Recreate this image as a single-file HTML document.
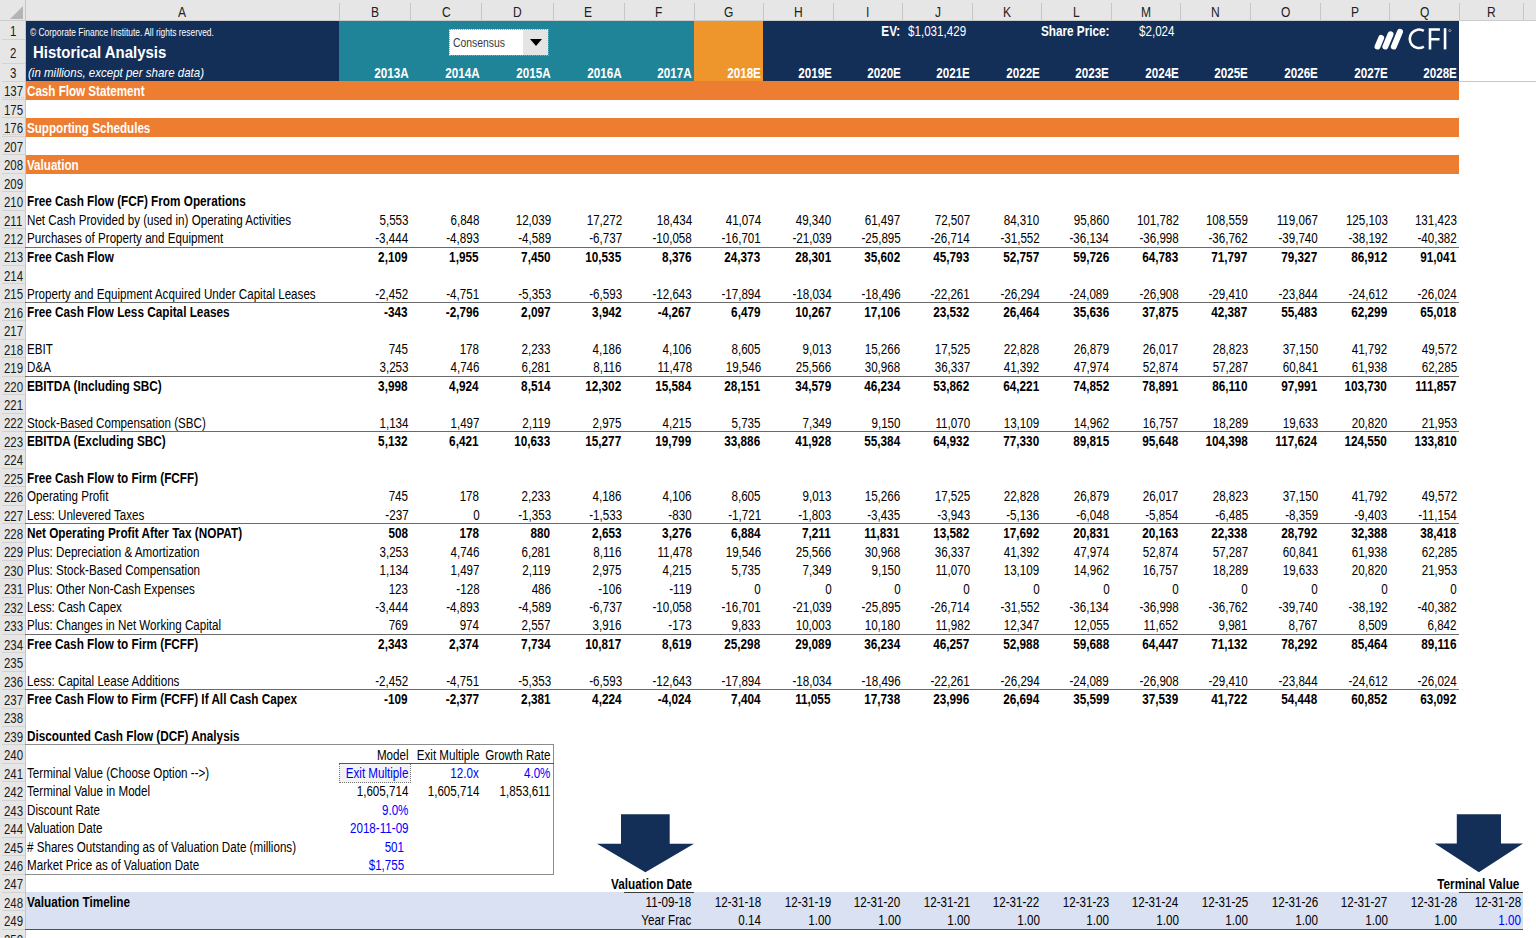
<!DOCTYPE html>
<html><head><meta charset="utf-8"><style>
html,body{margin:0;padding:0;}
body{width:1536px;height:938px;overflow:hidden;position:relative;background:#fff;font-family:"Liberation Sans",sans-serif;}
</style></head><body>
<div style="position:absolute;left:0.00px;top:0.00px;width:1536.00px;height:21.00px;background:#e6e6e6;"></div>
<div style="position:absolute;left:0.00px;top:0.00px;width:25.30px;height:938.00px;background:#e6e6e6;"></div>
<div style="position:absolute;left:25.30px;top:21.00px;width:313.80px;height:60.10px;background:#132e57;"></div>
<div style="position:absolute;left:339.10px;top:21.00px;width:354.90px;height:60.10px;background:#1f8497;"></div>
<div style="position:absolute;left:694.00px;top:21.00px;width:69.30px;height:60.10px;background:#ee952c;"></div>
<div style="position:absolute;left:763.30px;top:21.00px;width:695.90px;height:60.10px;background:#132e57;"></div>
<div style="position:absolute;left:1459.20px;top:80.60px;width:76.80px;height:1.00px;background:#c8c8c8;"></div>
<div style="position:absolute;left:25.30px;top:81.10px;width:1433.90px;height:18.80px;background:#ed7d31;"></div>
<div style="position:absolute;left:25.30px;top:117.80px;width:1433.90px;height:19.20px;background:#ed7d31;"></div>
<div style="position:absolute;left:25.30px;top:154.80px;width:1433.90px;height:19.20px;background:#ed7d31;"></div>
<div style="position:absolute;left:25.30px;top:892.46px;width:1498.00px;height:36.88px;background:#d9e1f2;"></div>
<div style="position:absolute;left:25.00px;top:3.00px;width:1.00px;height:17.00px;background:#c6c6c6;"></div>
<div style="position:absolute;top:5.03px;font-size:14.5px;line-height:14.5px;white-space:nowrap;color:#222;left:178.19px;transform-origin:0 0;transform:scaleX(0.83);">A</div>
<div style="position:absolute;left:339.00px;top:3.00px;width:1.00px;height:17.00px;background:#c6c6c6;"></div>
<div style="position:absolute;top:5.03px;font-size:14.5px;line-height:14.5px;white-space:nowrap;color:#222;left:370.79px;transform-origin:0 0;transform:scaleX(0.83);">B</div>
<div style="position:absolute;left:410.00px;top:3.00px;width:1.00px;height:17.00px;background:#c6c6c6;"></div>
<div style="position:absolute;top:5.03px;font-size:14.5px;line-height:14.5px;white-space:nowrap;color:#222;left:441.65px;transform-origin:0 0;transform:scaleX(0.83);">C</div>
<div style="position:absolute;left:481.00px;top:3.00px;width:1.00px;height:17.00px;background:#c6c6c6;"></div>
<div style="position:absolute;top:5.03px;font-size:14.5px;line-height:14.5px;white-space:nowrap;color:#222;left:512.90px;transform-origin:0 0;transform:scaleX(0.83);">D</div>
<div style="position:absolute;left:553.00px;top:3.00px;width:1.00px;height:17.00px;background:#c6c6c6;"></div>
<div style="position:absolute;top:5.03px;font-size:14.5px;line-height:14.5px;white-space:nowrap;color:#222;left:584.49px;transform-origin:0 0;transform:scaleX(0.83);">E</div>
<div style="position:absolute;left:624.00px;top:3.00px;width:1.00px;height:17.00px;background:#c6c6c6;"></div>
<div style="position:absolute;top:5.03px;font-size:14.5px;line-height:14.5px;white-space:nowrap;color:#222;left:655.32px;transform-origin:0 0;transform:scaleX(0.83);">F</div>
<div style="position:absolute;left:694.00px;top:3.00px;width:1.00px;height:17.00px;background:#c6c6c6;"></div>
<div style="position:absolute;top:5.03px;font-size:14.5px;line-height:14.5px;white-space:nowrap;color:#222;left:723.97px;transform-origin:0 0;transform:scaleX(0.83);">G</div>
<div style="position:absolute;left:763.00px;top:3.00px;width:1.00px;height:17.00px;background:#c6c6c6;"></div>
<div style="position:absolute;top:5.03px;font-size:14.5px;line-height:14.5px;white-space:nowrap;color:#222;left:794.10px;transform-origin:0 0;transform:scaleX(0.83);">H</div>
<div style="position:absolute;left:833.00px;top:3.00px;width:1.00px;height:17.00px;background:#c6c6c6;"></div>
<div style="position:absolute;top:5.03px;font-size:14.5px;line-height:14.5px;white-space:nowrap;color:#222;left:866.48px;transform-origin:0 0;transform:scaleX(0.83);">I</div>
<div style="position:absolute;left:902.00px;top:3.00px;width:1.00px;height:17.00px;background:#c6c6c6;"></div>
<div style="position:absolute;top:5.03px;font-size:14.5px;line-height:14.5px;white-space:nowrap;color:#222;left:934.54px;transform-origin:0 0;transform:scaleX(0.83);">J</div>
<div style="position:absolute;left:972.00px;top:3.00px;width:1.00px;height:17.00px;background:#c6c6c6;"></div>
<div style="position:absolute;top:5.03px;font-size:14.5px;line-height:14.5px;white-space:nowrap;color:#222;left:1003.04px;transform-origin:0 0;transform:scaleX(0.83);">K</div>
<div style="position:absolute;left:1041.00px;top:3.00px;width:1.00px;height:17.00px;background:#c6c6c6;"></div>
<div style="position:absolute;top:5.03px;font-size:14.5px;line-height:14.5px;white-space:nowrap;color:#222;left:1073.25px;transform-origin:0 0;transform:scaleX(0.83);">L</div>
<div style="position:absolute;left:1111.00px;top:3.00px;width:1.00px;height:17.00px;background:#c6c6c6;"></div>
<div style="position:absolute;top:5.03px;font-size:14.5px;line-height:14.5px;white-space:nowrap;color:#222;left:1141.19px;transform-origin:0 0;transform:scaleX(0.83);">M</div>
<div style="position:absolute;left:1180.00px;top:3.00px;width:1.00px;height:17.00px;background:#c6c6c6;"></div>
<div style="position:absolute;top:5.03px;font-size:14.5px;line-height:14.5px;white-space:nowrap;color:#222;left:1211.20px;transform-origin:0 0;transform:scaleX(0.83);">N</div>
<div style="position:absolute;left:1250.00px;top:3.00px;width:1.00px;height:17.00px;background:#c6c6c6;"></div>
<div style="position:absolute;top:5.03px;font-size:14.5px;line-height:14.5px;white-space:nowrap;color:#222;left:1280.52px;transform-origin:0 0;transform:scaleX(0.83);">O</div>
<div style="position:absolute;left:1320.00px;top:3.00px;width:1.00px;height:17.00px;background:#c6c6c6;"></div>
<div style="position:absolute;top:5.03px;font-size:14.5px;line-height:14.5px;white-space:nowrap;color:#222;left:1350.99px;transform-origin:0 0;transform:scaleX(0.83);">P</div>
<div style="position:absolute;left:1389.00px;top:3.00px;width:1.00px;height:17.00px;background:#c6c6c6;"></div>
<div style="position:absolute;top:5.03px;font-size:14.5px;line-height:14.5px;white-space:nowrap;color:#222;left:1419.82px;transform-origin:0 0;transform:scaleX(0.83);">Q</div>
<div style="position:absolute;left:1459.00px;top:3.00px;width:1.00px;height:17.00px;background:#c6c6c6;"></div>
<div style="position:absolute;top:5.03px;font-size:14.5px;line-height:14.5px;white-space:nowrap;color:#222;left:1486.90px;transform-origin:0 0;transform:scaleX(0.83);">R</div>
<div style="position:absolute;left:1523.00px;top:3.00px;width:1.00px;height:17.00px;background:#c6c6c6;"></div>
<div style="position:absolute;left:0.00px;top:20.00px;width:1536.00px;height:1.00px;background:#cccccc;"></div>
<svg style="position:absolute;left:0;top:0" width="26" height="21"><polygon points="10,19 23,19 23,6" fill="#b4b4b4"/></svg>
<div style="position:absolute;left:25.00px;top:0.00px;width:0.50px;height:938.00px;background:#c6c6c6;"></div>
<div style="position:absolute;left:2.00px;top:38.90px;width:23.30px;height:1.00px;background:#d2d2d2;"></div>
<div style="position:absolute;top:24.34px;font-size:14.6px;line-height:14.6px;white-space:nowrap;color:#1a1a1a;left:10.21px;transform-origin:0 0;transform:scaleX(0.785);">1</div>
<div style="position:absolute;left:2.00px;top:62.70px;width:23.30px;height:1.00px;background:#d2d2d2;"></div>
<div style="position:absolute;top:45.94px;font-size:14.6px;line-height:14.6px;white-space:nowrap;color:#1a1a1a;left:10.21px;transform-origin:0 0;transform:scaleX(0.785);">2</div>
<div style="position:absolute;left:2.00px;top:80.60px;width:23.30px;height:1.00px;background:#d2d2d2;"></div>
<div style="position:absolute;top:66.04px;font-size:14.6px;line-height:14.6px;white-space:nowrap;color:#1a1a1a;left:10.21px;transform-origin:0 0;transform:scaleX(0.785);">3</div>
<div style="position:absolute;left:2.00px;top:99.04px;width:23.30px;height:1.00px;background:#d2d2d2;"></div>
<div style="position:absolute;left:3px;top:97px;width:21px;height:0;border-top:1px dotted #c4c4c4"></div>
<div style="position:absolute;top:84.48px;font-size:14.6px;line-height:14.6px;white-space:nowrap;color:#1a1a1a;left:3.84px;transform-origin:0 0;transform:scaleX(0.785);">137</div>
<div style="position:absolute;left:2.00px;top:117.48px;width:23.30px;height:1.00px;background:#d2d2d2;"></div>
<div style="position:absolute;top:102.92px;font-size:14.6px;line-height:14.6px;white-space:nowrap;color:#1a1a1a;left:3.84px;transform-origin:0 0;transform:scaleX(0.785);">175</div>
<div style="position:absolute;left:2.00px;top:135.92px;width:23.30px;height:1.00px;background:#d2d2d2;"></div>
<div style="position:absolute;left:3px;top:134px;width:21px;height:0;border-top:1px dotted #c4c4c4"></div>
<div style="position:absolute;top:121.36px;font-size:14.6px;line-height:14.6px;white-space:nowrap;color:#1a1a1a;left:3.84px;transform-origin:0 0;transform:scaleX(0.785);">176</div>
<div style="position:absolute;left:2.00px;top:154.36px;width:23.30px;height:1.00px;background:#d2d2d2;"></div>
<div style="position:absolute;top:139.80px;font-size:14.6px;line-height:14.6px;white-space:nowrap;color:#1a1a1a;left:3.84px;transform-origin:0 0;transform:scaleX(0.785);">207</div>
<div style="position:absolute;left:2.00px;top:172.80px;width:23.30px;height:1.00px;background:#d2d2d2;"></div>
<div style="position:absolute;top:158.24px;font-size:14.6px;line-height:14.6px;white-space:nowrap;color:#1a1a1a;left:3.84px;transform-origin:0 0;transform:scaleX(0.785);">208</div>
<div style="position:absolute;left:2.00px;top:191.24px;width:23.30px;height:1.00px;background:#d2d2d2;"></div>
<div style="position:absolute;top:176.68px;font-size:14.6px;line-height:14.6px;white-space:nowrap;color:#1a1a1a;left:3.84px;transform-origin:0 0;transform:scaleX(0.785);">209</div>
<div style="position:absolute;left:2.00px;top:209.68px;width:23.30px;height:1.00px;background:#d2d2d2;"></div>
<div style="position:absolute;top:195.12px;font-size:14.6px;line-height:14.6px;white-space:nowrap;color:#1a1a1a;left:3.84px;transform-origin:0 0;transform:scaleX(0.785);">210</div>
<div style="position:absolute;left:2.00px;top:228.12px;width:23.30px;height:1.00px;background:#d2d2d2;"></div>
<div style="position:absolute;top:213.56px;font-size:14.6px;line-height:14.6px;white-space:nowrap;color:#1a1a1a;left:4.26px;transform-origin:0 0;transform:scaleX(0.785);">211</div>
<div style="position:absolute;left:2.00px;top:246.56px;width:23.30px;height:1.00px;background:#d2d2d2;"></div>
<div style="position:absolute;top:232.00px;font-size:14.6px;line-height:14.6px;white-space:nowrap;color:#1a1a1a;left:3.84px;transform-origin:0 0;transform:scaleX(0.785);">212</div>
<div style="position:absolute;left:2.00px;top:265.00px;width:23.30px;height:1.00px;background:#d2d2d2;"></div>
<div style="position:absolute;top:250.44px;font-size:14.6px;line-height:14.6px;white-space:nowrap;color:#1a1a1a;left:3.84px;transform-origin:0 0;transform:scaleX(0.785);">213</div>
<div style="position:absolute;left:2.00px;top:283.44px;width:23.30px;height:1.00px;background:#d2d2d2;"></div>
<div style="position:absolute;top:268.88px;font-size:14.6px;line-height:14.6px;white-space:nowrap;color:#1a1a1a;left:3.84px;transform-origin:0 0;transform:scaleX(0.785);">214</div>
<div style="position:absolute;left:2.00px;top:301.88px;width:23.30px;height:1.00px;background:#d2d2d2;"></div>
<div style="position:absolute;top:287.32px;font-size:14.6px;line-height:14.6px;white-space:nowrap;color:#1a1a1a;left:3.84px;transform-origin:0 0;transform:scaleX(0.785);">215</div>
<div style="position:absolute;left:2.00px;top:320.32px;width:23.30px;height:1.00px;background:#d2d2d2;"></div>
<div style="position:absolute;top:305.76px;font-size:14.6px;line-height:14.6px;white-space:nowrap;color:#1a1a1a;left:3.84px;transform-origin:0 0;transform:scaleX(0.785);">216</div>
<div style="position:absolute;left:2.00px;top:338.76px;width:23.30px;height:1.00px;background:#d2d2d2;"></div>
<div style="position:absolute;top:324.20px;font-size:14.6px;line-height:14.6px;white-space:nowrap;color:#1a1a1a;left:3.84px;transform-origin:0 0;transform:scaleX(0.785);">217</div>
<div style="position:absolute;left:2.00px;top:357.20px;width:23.30px;height:1.00px;background:#d2d2d2;"></div>
<div style="position:absolute;top:342.64px;font-size:14.6px;line-height:14.6px;white-space:nowrap;color:#1a1a1a;left:3.84px;transform-origin:0 0;transform:scaleX(0.785);">218</div>
<div style="position:absolute;left:2.00px;top:375.64px;width:23.30px;height:1.00px;background:#d2d2d2;"></div>
<div style="position:absolute;top:361.08px;font-size:14.6px;line-height:14.6px;white-space:nowrap;color:#1a1a1a;left:3.84px;transform-origin:0 0;transform:scaleX(0.785);">219</div>
<div style="position:absolute;left:2.00px;top:394.08px;width:23.30px;height:1.00px;background:#d2d2d2;"></div>
<div style="position:absolute;top:379.52px;font-size:14.6px;line-height:14.6px;white-space:nowrap;color:#1a1a1a;left:3.84px;transform-origin:0 0;transform:scaleX(0.785);">220</div>
<div style="position:absolute;left:2.00px;top:412.52px;width:23.30px;height:1.00px;background:#d2d2d2;"></div>
<div style="position:absolute;top:397.96px;font-size:14.6px;line-height:14.6px;white-space:nowrap;color:#1a1a1a;left:3.84px;transform-origin:0 0;transform:scaleX(0.785);">221</div>
<div style="position:absolute;left:2.00px;top:430.96px;width:23.30px;height:1.00px;background:#d2d2d2;"></div>
<div style="position:absolute;top:416.40px;font-size:14.6px;line-height:14.6px;white-space:nowrap;color:#1a1a1a;left:3.84px;transform-origin:0 0;transform:scaleX(0.785);">222</div>
<div style="position:absolute;left:2.00px;top:449.40px;width:23.30px;height:1.00px;background:#d2d2d2;"></div>
<div style="position:absolute;top:434.84px;font-size:14.6px;line-height:14.6px;white-space:nowrap;color:#1a1a1a;left:3.84px;transform-origin:0 0;transform:scaleX(0.785);">223</div>
<div style="position:absolute;left:2.00px;top:467.84px;width:23.30px;height:1.00px;background:#d2d2d2;"></div>
<div style="position:absolute;top:453.28px;font-size:14.6px;line-height:14.6px;white-space:nowrap;color:#1a1a1a;left:3.84px;transform-origin:0 0;transform:scaleX(0.785);">224</div>
<div style="position:absolute;left:2.00px;top:486.28px;width:23.30px;height:1.00px;background:#d2d2d2;"></div>
<div style="position:absolute;top:471.72px;font-size:14.6px;line-height:14.6px;white-space:nowrap;color:#1a1a1a;left:3.84px;transform-origin:0 0;transform:scaleX(0.785);">225</div>
<div style="position:absolute;left:2.00px;top:504.72px;width:23.30px;height:1.00px;background:#d2d2d2;"></div>
<div style="position:absolute;top:490.16px;font-size:14.6px;line-height:14.6px;white-space:nowrap;color:#1a1a1a;left:3.84px;transform-origin:0 0;transform:scaleX(0.785);">226</div>
<div style="position:absolute;left:2.00px;top:523.16px;width:23.30px;height:1.00px;background:#d2d2d2;"></div>
<div style="position:absolute;top:508.60px;font-size:14.6px;line-height:14.6px;white-space:nowrap;color:#1a1a1a;left:3.84px;transform-origin:0 0;transform:scaleX(0.785);">227</div>
<div style="position:absolute;left:2.00px;top:541.60px;width:23.30px;height:1.00px;background:#d2d2d2;"></div>
<div style="position:absolute;top:527.04px;font-size:14.6px;line-height:14.6px;white-space:nowrap;color:#1a1a1a;left:3.84px;transform-origin:0 0;transform:scaleX(0.785);">228</div>
<div style="position:absolute;left:2.00px;top:560.04px;width:23.30px;height:1.00px;background:#d2d2d2;"></div>
<div style="position:absolute;top:545.48px;font-size:14.6px;line-height:14.6px;white-space:nowrap;color:#1a1a1a;left:3.84px;transform-origin:0 0;transform:scaleX(0.785);">229</div>
<div style="position:absolute;left:2.00px;top:578.48px;width:23.30px;height:1.00px;background:#d2d2d2;"></div>
<div style="position:absolute;top:563.92px;font-size:14.6px;line-height:14.6px;white-space:nowrap;color:#1a1a1a;left:3.84px;transform-origin:0 0;transform:scaleX(0.785);">230</div>
<div style="position:absolute;left:2.00px;top:596.92px;width:23.30px;height:1.00px;background:#d2d2d2;"></div>
<div style="position:absolute;top:582.36px;font-size:14.6px;line-height:14.6px;white-space:nowrap;color:#1a1a1a;left:3.84px;transform-origin:0 0;transform:scaleX(0.785);">231</div>
<div style="position:absolute;left:2.00px;top:615.36px;width:23.30px;height:1.00px;background:#d2d2d2;"></div>
<div style="position:absolute;top:600.80px;font-size:14.6px;line-height:14.6px;white-space:nowrap;color:#1a1a1a;left:3.84px;transform-origin:0 0;transform:scaleX(0.785);">232</div>
<div style="position:absolute;left:2.00px;top:633.80px;width:23.30px;height:1.00px;background:#d2d2d2;"></div>
<div style="position:absolute;top:619.24px;font-size:14.6px;line-height:14.6px;white-space:nowrap;color:#1a1a1a;left:3.84px;transform-origin:0 0;transform:scaleX(0.785);">233</div>
<div style="position:absolute;left:2.00px;top:652.24px;width:23.30px;height:1.00px;background:#d2d2d2;"></div>
<div style="position:absolute;top:637.68px;font-size:14.6px;line-height:14.6px;white-space:nowrap;color:#1a1a1a;left:3.84px;transform-origin:0 0;transform:scaleX(0.785);">234</div>
<div style="position:absolute;left:2.00px;top:670.68px;width:23.30px;height:1.00px;background:#d2d2d2;"></div>
<div style="position:absolute;top:656.12px;font-size:14.6px;line-height:14.6px;white-space:nowrap;color:#1a1a1a;left:3.84px;transform-origin:0 0;transform:scaleX(0.785);">235</div>
<div style="position:absolute;left:2.00px;top:689.12px;width:23.30px;height:1.00px;background:#d2d2d2;"></div>
<div style="position:absolute;top:674.56px;font-size:14.6px;line-height:14.6px;white-space:nowrap;color:#1a1a1a;left:3.84px;transform-origin:0 0;transform:scaleX(0.785);">236</div>
<div style="position:absolute;left:2.00px;top:707.56px;width:23.30px;height:1.00px;background:#d2d2d2;"></div>
<div style="position:absolute;top:693.00px;font-size:14.6px;line-height:14.6px;white-space:nowrap;color:#1a1a1a;left:3.84px;transform-origin:0 0;transform:scaleX(0.785);">237</div>
<div style="position:absolute;left:2.00px;top:726.00px;width:23.30px;height:1.00px;background:#d2d2d2;"></div>
<div style="position:absolute;top:711.44px;font-size:14.6px;line-height:14.6px;white-space:nowrap;color:#1a1a1a;left:3.84px;transform-origin:0 0;transform:scaleX(0.785);">238</div>
<div style="position:absolute;left:2.00px;top:744.44px;width:23.30px;height:1.00px;background:#d2d2d2;"></div>
<div style="position:absolute;top:729.88px;font-size:14.6px;line-height:14.6px;white-space:nowrap;color:#1a1a1a;left:3.84px;transform-origin:0 0;transform:scaleX(0.785);">239</div>
<div style="position:absolute;left:2.00px;top:762.88px;width:23.30px;height:1.00px;background:#d2d2d2;"></div>
<div style="position:absolute;top:748.32px;font-size:14.6px;line-height:14.6px;white-space:nowrap;color:#1a1a1a;left:3.84px;transform-origin:0 0;transform:scaleX(0.785);">240</div>
<div style="position:absolute;left:2.00px;top:781.32px;width:23.30px;height:1.00px;background:#d2d2d2;"></div>
<div style="position:absolute;top:766.76px;font-size:14.6px;line-height:14.6px;white-space:nowrap;color:#1a1a1a;left:3.84px;transform-origin:0 0;transform:scaleX(0.785);">241</div>
<div style="position:absolute;left:2.00px;top:799.76px;width:23.30px;height:1.00px;background:#d2d2d2;"></div>
<div style="position:absolute;top:785.20px;font-size:14.6px;line-height:14.6px;white-space:nowrap;color:#1a1a1a;left:3.84px;transform-origin:0 0;transform:scaleX(0.785);">242</div>
<div style="position:absolute;left:2.00px;top:818.20px;width:23.30px;height:1.00px;background:#d2d2d2;"></div>
<div style="position:absolute;top:803.64px;font-size:14.6px;line-height:14.6px;white-space:nowrap;color:#1a1a1a;left:3.84px;transform-origin:0 0;transform:scaleX(0.785);">243</div>
<div style="position:absolute;left:2.00px;top:836.64px;width:23.30px;height:1.00px;background:#d2d2d2;"></div>
<div style="position:absolute;top:822.08px;font-size:14.6px;line-height:14.6px;white-space:nowrap;color:#1a1a1a;left:3.84px;transform-origin:0 0;transform:scaleX(0.785);">244</div>
<div style="position:absolute;left:2.00px;top:855.08px;width:23.30px;height:1.00px;background:#d2d2d2;"></div>
<div style="position:absolute;top:840.52px;font-size:14.6px;line-height:14.6px;white-space:nowrap;color:#1a1a1a;left:3.84px;transform-origin:0 0;transform:scaleX(0.785);">245</div>
<div style="position:absolute;left:2.00px;top:873.52px;width:23.30px;height:1.00px;background:#d2d2d2;"></div>
<div style="position:absolute;top:858.96px;font-size:14.6px;line-height:14.6px;white-space:nowrap;color:#1a1a1a;left:3.84px;transform-origin:0 0;transform:scaleX(0.785);">246</div>
<div style="position:absolute;left:2.00px;top:891.96px;width:23.30px;height:1.00px;background:#d2d2d2;"></div>
<div style="position:absolute;top:877.40px;font-size:14.6px;line-height:14.6px;white-space:nowrap;color:#1a1a1a;left:3.84px;transform-origin:0 0;transform:scaleX(0.785);">247</div>
<div style="position:absolute;left:2.00px;top:910.40px;width:23.30px;height:1.00px;background:#d2d2d2;"></div>
<div style="position:absolute;top:895.84px;font-size:14.6px;line-height:14.6px;white-space:nowrap;color:#1a1a1a;left:3.84px;transform-origin:0 0;transform:scaleX(0.785);">248</div>
<div style="position:absolute;left:2.00px;top:928.84px;width:23.30px;height:1.00px;background:#d2d2d2;"></div>
<div style="position:absolute;top:914.28px;font-size:14.6px;line-height:14.6px;white-space:nowrap;color:#1a1a1a;left:3.84px;transform-origin:0 0;transform:scaleX(0.785);">249</div>
<div style="position:absolute;left:2.00px;top:947.28px;width:23.30px;height:1.00px;background:#d2d2d2;"></div>
<div style="position:absolute;top:932.72px;font-size:14.6px;line-height:14.6px;white-space:nowrap;color:#1a1a1a;left:3.84px;transform-origin:0 0;transform:scaleX(0.785);">250</div>
<div style="position:absolute;top:27.02px;font-size:11.2px;line-height:11.2px;white-space:nowrap;color:#fff;left:29.50px;transform-origin:0 0;transform:scaleX(0.752);">© Corporate Finance Institute. All rights reserved.</div>
<div style="position:absolute;top:43.61px;font-size:17px;line-height:17px;white-space:nowrap;color:#fff;font-weight:bold;left:33.20px;transform-origin:0 0;transform:scaleX(0.88);">Historical Analysis</div>
<div style="position:absolute;top:65.60px;font-size:13px;line-height:13px;white-space:nowrap;color:#fff;font-style:italic;left:27.90px;transform-origin:0 0;transform:scaleX(0.886);">(in millions, except per share data)</div>
<div style="position:absolute;top:67.02px;font-size:13.8px;line-height:13.8px;white-space:nowrap;color:#fff;font-weight:bold;right:1127.70px;transform-origin:100% 0;transform:scaleX(0.845);">2013A</div>
<div style="position:absolute;top:67.02px;font-size:13.8px;line-height:13.8px;white-space:nowrap;color:#fff;font-weight:bold;right:1056.70px;transform-origin:100% 0;transform:scaleX(0.845);">2014A</div>
<div style="position:absolute;top:67.02px;font-size:13.8px;line-height:13.8px;white-space:nowrap;color:#fff;font-weight:bold;right:985.20px;transform-origin:100% 0;transform:scaleX(0.845);">2015A</div>
<div style="position:absolute;top:67.02px;font-size:13.8px;line-height:13.8px;white-space:nowrap;color:#fff;font-weight:bold;right:914.20px;transform-origin:100% 0;transform:scaleX(0.845);">2016A</div>
<div style="position:absolute;top:67.02px;font-size:13.8px;line-height:13.8px;white-space:nowrap;color:#fff;font-weight:bold;right:844.20px;transform-origin:100% 0;transform:scaleX(0.845);">2017A</div>
<div style="position:absolute;top:67.02px;font-size:13.8px;line-height:13.8px;white-space:nowrap;color:#fff;font-weight:bold;right:774.90px;transform-origin:100% 0;transform:scaleX(0.845);">2018E</div>
<div style="position:absolute;top:67.02px;font-size:13.8px;line-height:13.8px;white-space:nowrap;color:#fff;font-weight:bold;right:704.60px;transform-origin:100% 0;transform:scaleX(0.845);">2019E</div>
<div style="position:absolute;top:67.02px;font-size:13.8px;line-height:13.8px;white-space:nowrap;color:#fff;font-weight:bold;right:635.50px;transform-origin:100% 0;transform:scaleX(0.845);">2020E</div>
<div style="position:absolute;top:67.02px;font-size:13.8px;line-height:13.8px;white-space:nowrap;color:#fff;font-weight:bold;right:565.80px;transform-origin:100% 0;transform:scaleX(0.845);">2021E</div>
<div style="position:absolute;top:67.02px;font-size:13.8px;line-height:13.8px;white-space:nowrap;color:#fff;font-weight:bold;right:496.50px;transform-origin:100% 0;transform:scaleX(0.845);">2022E</div>
<div style="position:absolute;top:67.02px;font-size:13.8px;line-height:13.8px;white-space:nowrap;color:#fff;font-weight:bold;right:426.70px;transform-origin:100% 0;transform:scaleX(0.845);">2023E</div>
<div style="position:absolute;top:67.02px;font-size:13.8px;line-height:13.8px;white-space:nowrap;color:#fff;font-weight:bold;right:357.30px;transform-origin:100% 0;transform:scaleX(0.845);">2024E</div>
<div style="position:absolute;top:67.02px;font-size:13.8px;line-height:13.8px;white-space:nowrap;color:#fff;font-weight:bold;right:288.00px;transform-origin:100% 0;transform:scaleX(0.845);">2025E</div>
<div style="position:absolute;top:67.02px;font-size:13.8px;line-height:13.8px;white-space:nowrap;color:#fff;font-weight:bold;right:218.00px;transform-origin:100% 0;transform:scaleX(0.845);">2026E</div>
<div style="position:absolute;top:67.02px;font-size:13.8px;line-height:13.8px;white-space:nowrap;color:#fff;font-weight:bold;right:148.40px;transform-origin:100% 0;transform:scaleX(0.845);">2027E</div>
<div style="position:absolute;top:67.02px;font-size:13.8px;line-height:13.8px;white-space:nowrap;color:#fff;font-weight:bold;right:79.00px;transform-origin:100% 0;transform:scaleX(0.845);">2028E</div>
<div style="position:absolute;top:24.82px;font-size:13.8px;line-height:13.8px;white-space:nowrap;color:#fff;font-weight:bold;right:635.40px;transform-origin:100% 0;transform:scaleX(0.852);">EV:</div>
<div style="position:absolute;top:24.82px;font-size:13.8px;line-height:13.8px;white-space:nowrap;color:#fff;left:907.90px;transform-origin:0 0;transform:scaleX(0.842);">$1,031,429</div>
<div style="position:absolute;top:24.82px;font-size:13.8px;line-height:13.8px;white-space:nowrap;color:#fff;font-weight:bold;right:426.80px;transform-origin:100% 0;transform:scaleX(0.852);">Share Price:</div>
<div style="position:absolute;top:24.82px;font-size:13.8px;line-height:13.8px;white-space:nowrap;color:#fff;left:1138.90px;transform-origin:0 0;transform:scaleX(0.842);">$2,024</div>
<div style="position:absolute;left:448.90px;top:28.70px;width:74.50px;height:25.90px;background:#fff;"></div>
<div style="position:absolute;left:523.40px;top:28.70px;width:25.10px;height:25.90px;background:#e4e4e4;"></div>
<div style="position:absolute;left:448.9px;top:28.7px;width:98.6px;height:24.9px;border:1px dotted #a0a0a0"></div>
<svg style="position:absolute;left:529px;top:38px" width="14" height="9"><polygon points="1,1 13,1 7,8" fill="#000"/></svg>
<div style="position:absolute;top:35.90px;font-size:13px;line-height:13px;white-space:nowrap;color:#3a3a3a;left:453.40px;transform-origin:0 0;transform:scaleX(0.8);">Consensus</div>
<svg style="position:absolute;left:1370px;top:25px" width="90" height="30" viewBox="1370 25 90 30">
<g stroke="#fff" stroke-width="5.9" stroke-linecap="round" fill="none">
<line x1="1377.5" y1="46.55" x2="1381.2" y2="37.85"/>
<line x1="1385.35" y1="46.55" x2="1390.55" y2="34.25"/>
<line x1="1393.8" y1="46.55" x2="1400.0" y2="31.75"/>
</g>
<g stroke="#fff" stroke-width="2.6" fill="none">
<path d="M1423.8,30.9 A9.25,9.25 0 1 0 1423.8,46.7"/>
<path d="M1430.0,49.4 L1430.0,29.5 L1439.9,29.5 M1430.0,39.3 L1439.5,39.3"/>
<path d="M1445.05,28.2 L1445.05,49.4"/>
</g>
<circle cx="1449.8" cy="30.6" r="1.1" stroke="#fff" stroke-width="0.5" fill="none"/>
</svg>
<div style="position:absolute;top:84.49px;font-size:14px;line-height:14px;white-space:nowrap;color:#fff;font-weight:bold;left:27.00px;transform-origin:0 0;transform:scaleX(0.83);">Cash Flow Statement</div>
<div style="position:absolute;top:121.37px;font-size:14px;line-height:14px;white-space:nowrap;color:#fff;font-weight:bold;left:27.00px;transform-origin:0 0;transform:scaleX(0.83);">Supporting Schedules</div>
<div style="position:absolute;top:158.25px;font-size:14px;line-height:14px;white-space:nowrap;color:#fff;font-weight:bold;left:27.00px;transform-origin:0 0;transform:scaleX(0.83);">Valuation</div>
<div style="position:absolute;top:195.30px;font-size:13.8px;line-height:13.8px;white-space:nowrap;color:#000;font-weight:bold;left:27.00px;transform-origin:0 0;transform:scaleX(0.852);">Free Cash Flow (FCF) From Operations</div>
<div style="position:absolute;top:213.74px;font-size:13.8px;line-height:13.8px;white-space:nowrap;color:#000;left:27.00px;transform-origin:0 0;transform:scaleX(0.842);">Net Cash Provided by (used in) Operating Activities</div>
<div style="position:absolute;top:213.74px;font-size:13.8px;line-height:13.8px;white-space:nowrap;color:#000;right:1127.80px;transform-origin:100% 0;transform:scaleX(0.842);">5,553</div>
<div style="position:absolute;top:213.74px;font-size:13.8px;line-height:13.8px;white-space:nowrap;color:#000;right:1056.80px;transform-origin:100% 0;transform:scaleX(0.842);">6,848</div>
<div style="position:absolute;top:213.74px;font-size:13.8px;line-height:13.8px;white-space:nowrap;color:#000;right:985.30px;transform-origin:100% 0;transform:scaleX(0.842);">12,039</div>
<div style="position:absolute;top:213.74px;font-size:13.8px;line-height:13.8px;white-space:nowrap;color:#000;right:914.30px;transform-origin:100% 0;transform:scaleX(0.842);">17,272</div>
<div style="position:absolute;top:213.74px;font-size:13.8px;line-height:13.8px;white-space:nowrap;color:#000;right:844.30px;transform-origin:100% 0;transform:scaleX(0.842);">18,434</div>
<div style="position:absolute;top:213.74px;font-size:13.8px;line-height:13.8px;white-space:nowrap;color:#000;right:775.00px;transform-origin:100% 0;transform:scaleX(0.842);">41,074</div>
<div style="position:absolute;top:213.74px;font-size:13.8px;line-height:13.8px;white-space:nowrap;color:#000;right:704.70px;transform-origin:100% 0;transform:scaleX(0.842);">49,340</div>
<div style="position:absolute;top:213.74px;font-size:13.8px;line-height:13.8px;white-space:nowrap;color:#000;right:635.60px;transform-origin:100% 0;transform:scaleX(0.842);">61,497</div>
<div style="position:absolute;top:213.74px;font-size:13.8px;line-height:13.8px;white-space:nowrap;color:#000;right:565.90px;transform-origin:100% 0;transform:scaleX(0.842);">72,507</div>
<div style="position:absolute;top:213.74px;font-size:13.8px;line-height:13.8px;white-space:nowrap;color:#000;right:496.60px;transform-origin:100% 0;transform:scaleX(0.842);">84,310</div>
<div style="position:absolute;top:213.74px;font-size:13.8px;line-height:13.8px;white-space:nowrap;color:#000;right:426.80px;transform-origin:100% 0;transform:scaleX(0.842);">95,860</div>
<div style="position:absolute;top:213.74px;font-size:13.8px;line-height:13.8px;white-space:nowrap;color:#000;right:357.40px;transform-origin:100% 0;transform:scaleX(0.842);">101,782</div>
<div style="position:absolute;top:213.74px;font-size:13.8px;line-height:13.8px;white-space:nowrap;color:#000;right:288.10px;transform-origin:100% 0;transform:scaleX(0.842);">108,559</div>
<div style="position:absolute;top:213.74px;font-size:13.8px;line-height:13.8px;white-space:nowrap;color:#000;right:218.10px;transform-origin:100% 0;transform:scaleX(0.842);">119,067</div>
<div style="position:absolute;top:213.74px;font-size:13.8px;line-height:13.8px;white-space:nowrap;color:#000;right:148.50px;transform-origin:100% 0;transform:scaleX(0.842);">125,103</div>
<div style="position:absolute;top:213.74px;font-size:13.8px;line-height:13.8px;white-space:nowrap;color:#000;right:79.10px;transform-origin:100% 0;transform:scaleX(0.842);">131,423</div>
<div style="position:absolute;top:232.18px;font-size:13.8px;line-height:13.8px;white-space:nowrap;color:#000;left:27.00px;transform-origin:0 0;transform:scaleX(0.842);">Purchases of Property and Equipment</div>
<div style="position:absolute;top:232.18px;font-size:13.8px;line-height:13.8px;white-space:nowrap;color:#000;right:1127.80px;transform-origin:100% 0;transform:scaleX(0.842);">-3,444</div>
<div style="position:absolute;top:232.18px;font-size:13.8px;line-height:13.8px;white-space:nowrap;color:#000;right:1056.80px;transform-origin:100% 0;transform:scaleX(0.842);">-4,893</div>
<div style="position:absolute;top:232.18px;font-size:13.8px;line-height:13.8px;white-space:nowrap;color:#000;right:985.30px;transform-origin:100% 0;transform:scaleX(0.842);">-4,589</div>
<div style="position:absolute;top:232.18px;font-size:13.8px;line-height:13.8px;white-space:nowrap;color:#000;right:914.30px;transform-origin:100% 0;transform:scaleX(0.842);">-6,737</div>
<div style="position:absolute;top:232.18px;font-size:13.8px;line-height:13.8px;white-space:nowrap;color:#000;right:844.30px;transform-origin:100% 0;transform:scaleX(0.842);">-10,058</div>
<div style="position:absolute;top:232.18px;font-size:13.8px;line-height:13.8px;white-space:nowrap;color:#000;right:775.00px;transform-origin:100% 0;transform:scaleX(0.842);">-16,701</div>
<div style="position:absolute;top:232.18px;font-size:13.8px;line-height:13.8px;white-space:nowrap;color:#000;right:704.70px;transform-origin:100% 0;transform:scaleX(0.842);">-21,039</div>
<div style="position:absolute;top:232.18px;font-size:13.8px;line-height:13.8px;white-space:nowrap;color:#000;right:635.60px;transform-origin:100% 0;transform:scaleX(0.842);">-25,895</div>
<div style="position:absolute;top:232.18px;font-size:13.8px;line-height:13.8px;white-space:nowrap;color:#000;right:565.90px;transform-origin:100% 0;transform:scaleX(0.842);">-26,714</div>
<div style="position:absolute;top:232.18px;font-size:13.8px;line-height:13.8px;white-space:nowrap;color:#000;right:496.60px;transform-origin:100% 0;transform:scaleX(0.842);">-31,552</div>
<div style="position:absolute;top:232.18px;font-size:13.8px;line-height:13.8px;white-space:nowrap;color:#000;right:426.80px;transform-origin:100% 0;transform:scaleX(0.842);">-36,134</div>
<div style="position:absolute;top:232.18px;font-size:13.8px;line-height:13.8px;white-space:nowrap;color:#000;right:357.40px;transform-origin:100% 0;transform:scaleX(0.842);">-36,998</div>
<div style="position:absolute;top:232.18px;font-size:13.8px;line-height:13.8px;white-space:nowrap;color:#000;right:288.10px;transform-origin:100% 0;transform:scaleX(0.842);">-36,762</div>
<div style="position:absolute;top:232.18px;font-size:13.8px;line-height:13.8px;white-space:nowrap;color:#000;right:218.10px;transform-origin:100% 0;transform:scaleX(0.842);">-39,740</div>
<div style="position:absolute;top:232.18px;font-size:13.8px;line-height:13.8px;white-space:nowrap;color:#000;right:148.50px;transform-origin:100% 0;transform:scaleX(0.842);">-38,192</div>
<div style="position:absolute;top:232.18px;font-size:13.8px;line-height:13.8px;white-space:nowrap;color:#000;right:79.10px;transform-origin:100% 0;transform:scaleX(0.842);">-40,382</div>
<div style="position:absolute;left:25.30px;top:247.00px;width:1433.90px;height:1.00px;background:#6a6a6a;"></div>
<div style="position:absolute;top:250.62px;font-size:13.8px;line-height:13.8px;white-space:nowrap;color:#000;font-weight:bold;left:27.00px;transform-origin:0 0;transform:scaleX(0.852);">Free Cash Flow</div>
<div style="position:absolute;top:250.62px;font-size:13.8px;line-height:13.8px;white-space:nowrap;color:#000;font-weight:bold;right:1128.30px;transform-origin:100% 0;transform:scaleX(0.852);">2,109</div>
<div style="position:absolute;top:250.62px;font-size:13.8px;line-height:13.8px;white-space:nowrap;color:#000;font-weight:bold;right:1057.30px;transform-origin:100% 0;transform:scaleX(0.852);">1,955</div>
<div style="position:absolute;top:250.62px;font-size:13.8px;line-height:13.8px;white-space:nowrap;color:#000;font-weight:bold;right:985.80px;transform-origin:100% 0;transform:scaleX(0.852);">7,450</div>
<div style="position:absolute;top:250.62px;font-size:13.8px;line-height:13.8px;white-space:nowrap;color:#000;font-weight:bold;right:914.80px;transform-origin:100% 0;transform:scaleX(0.852);">10,535</div>
<div style="position:absolute;top:250.62px;font-size:13.8px;line-height:13.8px;white-space:nowrap;color:#000;font-weight:bold;right:844.80px;transform-origin:100% 0;transform:scaleX(0.852);">8,376</div>
<div style="position:absolute;top:250.62px;font-size:13.8px;line-height:13.8px;white-space:nowrap;color:#000;font-weight:bold;right:775.50px;transform-origin:100% 0;transform:scaleX(0.852);">24,373</div>
<div style="position:absolute;top:250.62px;font-size:13.8px;line-height:13.8px;white-space:nowrap;color:#000;font-weight:bold;right:705.20px;transform-origin:100% 0;transform:scaleX(0.852);">28,301</div>
<div style="position:absolute;top:250.62px;font-size:13.8px;line-height:13.8px;white-space:nowrap;color:#000;font-weight:bold;right:636.10px;transform-origin:100% 0;transform:scaleX(0.852);">35,602</div>
<div style="position:absolute;top:250.62px;font-size:13.8px;line-height:13.8px;white-space:nowrap;color:#000;font-weight:bold;right:566.40px;transform-origin:100% 0;transform:scaleX(0.852);">45,793</div>
<div style="position:absolute;top:250.62px;font-size:13.8px;line-height:13.8px;white-space:nowrap;color:#000;font-weight:bold;right:497.10px;transform-origin:100% 0;transform:scaleX(0.852);">52,757</div>
<div style="position:absolute;top:250.62px;font-size:13.8px;line-height:13.8px;white-space:nowrap;color:#000;font-weight:bold;right:427.30px;transform-origin:100% 0;transform:scaleX(0.852);">59,726</div>
<div style="position:absolute;top:250.62px;font-size:13.8px;line-height:13.8px;white-space:nowrap;color:#000;font-weight:bold;right:357.90px;transform-origin:100% 0;transform:scaleX(0.852);">64,783</div>
<div style="position:absolute;top:250.62px;font-size:13.8px;line-height:13.8px;white-space:nowrap;color:#000;font-weight:bold;right:288.60px;transform-origin:100% 0;transform:scaleX(0.852);">71,797</div>
<div style="position:absolute;top:250.62px;font-size:13.8px;line-height:13.8px;white-space:nowrap;color:#000;font-weight:bold;right:218.60px;transform-origin:100% 0;transform:scaleX(0.852);">79,327</div>
<div style="position:absolute;top:250.62px;font-size:13.8px;line-height:13.8px;white-space:nowrap;color:#000;font-weight:bold;right:149.00px;transform-origin:100% 0;transform:scaleX(0.852);">86,912</div>
<div style="position:absolute;top:250.62px;font-size:13.8px;line-height:13.8px;white-space:nowrap;color:#000;font-weight:bold;right:79.60px;transform-origin:100% 0;transform:scaleX(0.852);">91,041</div>
<div style="position:absolute;top:287.50px;font-size:13.8px;line-height:13.8px;white-space:nowrap;color:#000;left:27.00px;transform-origin:0 0;transform:scaleX(0.842);">Property and Equipment Acquired Under Capital Leases</div>
<div style="position:absolute;top:287.50px;font-size:13.8px;line-height:13.8px;white-space:nowrap;color:#000;right:1127.80px;transform-origin:100% 0;transform:scaleX(0.842);">-2,452</div>
<div style="position:absolute;top:287.50px;font-size:13.8px;line-height:13.8px;white-space:nowrap;color:#000;right:1056.80px;transform-origin:100% 0;transform:scaleX(0.842);">-4,751</div>
<div style="position:absolute;top:287.50px;font-size:13.8px;line-height:13.8px;white-space:nowrap;color:#000;right:985.30px;transform-origin:100% 0;transform:scaleX(0.842);">-5,353</div>
<div style="position:absolute;top:287.50px;font-size:13.8px;line-height:13.8px;white-space:nowrap;color:#000;right:914.30px;transform-origin:100% 0;transform:scaleX(0.842);">-6,593</div>
<div style="position:absolute;top:287.50px;font-size:13.8px;line-height:13.8px;white-space:nowrap;color:#000;right:844.30px;transform-origin:100% 0;transform:scaleX(0.842);">-12,643</div>
<div style="position:absolute;top:287.50px;font-size:13.8px;line-height:13.8px;white-space:nowrap;color:#000;right:775.00px;transform-origin:100% 0;transform:scaleX(0.842);">-17,894</div>
<div style="position:absolute;top:287.50px;font-size:13.8px;line-height:13.8px;white-space:nowrap;color:#000;right:704.70px;transform-origin:100% 0;transform:scaleX(0.842);">-18,034</div>
<div style="position:absolute;top:287.50px;font-size:13.8px;line-height:13.8px;white-space:nowrap;color:#000;right:635.60px;transform-origin:100% 0;transform:scaleX(0.842);">-18,496</div>
<div style="position:absolute;top:287.50px;font-size:13.8px;line-height:13.8px;white-space:nowrap;color:#000;right:565.90px;transform-origin:100% 0;transform:scaleX(0.842);">-22,261</div>
<div style="position:absolute;top:287.50px;font-size:13.8px;line-height:13.8px;white-space:nowrap;color:#000;right:496.60px;transform-origin:100% 0;transform:scaleX(0.842);">-26,294</div>
<div style="position:absolute;top:287.50px;font-size:13.8px;line-height:13.8px;white-space:nowrap;color:#000;right:426.80px;transform-origin:100% 0;transform:scaleX(0.842);">-24,089</div>
<div style="position:absolute;top:287.50px;font-size:13.8px;line-height:13.8px;white-space:nowrap;color:#000;right:357.40px;transform-origin:100% 0;transform:scaleX(0.842);">-26,908</div>
<div style="position:absolute;top:287.50px;font-size:13.8px;line-height:13.8px;white-space:nowrap;color:#000;right:288.10px;transform-origin:100% 0;transform:scaleX(0.842);">-29,410</div>
<div style="position:absolute;top:287.50px;font-size:13.8px;line-height:13.8px;white-space:nowrap;color:#000;right:218.10px;transform-origin:100% 0;transform:scaleX(0.842);">-23,844</div>
<div style="position:absolute;top:287.50px;font-size:13.8px;line-height:13.8px;white-space:nowrap;color:#000;right:148.50px;transform-origin:100% 0;transform:scaleX(0.842);">-24,612</div>
<div style="position:absolute;top:287.50px;font-size:13.8px;line-height:13.8px;white-space:nowrap;color:#000;right:79.10px;transform-origin:100% 0;transform:scaleX(0.842);">-26,024</div>
<div style="position:absolute;left:25.30px;top:302.00px;width:1433.90px;height:1.00px;background:#6a6a6a;"></div>
<div style="position:absolute;top:305.94px;font-size:13.8px;line-height:13.8px;white-space:nowrap;color:#000;font-weight:bold;left:27.00px;transform-origin:0 0;transform:scaleX(0.852);">Free Cash Flow Less Capital Leases</div>
<div style="position:absolute;top:305.94px;font-size:13.8px;line-height:13.8px;white-space:nowrap;color:#000;font-weight:bold;right:1128.30px;transform-origin:100% 0;transform:scaleX(0.852);">-343</div>
<div style="position:absolute;top:305.94px;font-size:13.8px;line-height:13.8px;white-space:nowrap;color:#000;font-weight:bold;right:1057.30px;transform-origin:100% 0;transform:scaleX(0.852);">-2,796</div>
<div style="position:absolute;top:305.94px;font-size:13.8px;line-height:13.8px;white-space:nowrap;color:#000;font-weight:bold;right:985.80px;transform-origin:100% 0;transform:scaleX(0.852);">2,097</div>
<div style="position:absolute;top:305.94px;font-size:13.8px;line-height:13.8px;white-space:nowrap;color:#000;font-weight:bold;right:914.80px;transform-origin:100% 0;transform:scaleX(0.852);">3,942</div>
<div style="position:absolute;top:305.94px;font-size:13.8px;line-height:13.8px;white-space:nowrap;color:#000;font-weight:bold;right:844.80px;transform-origin:100% 0;transform:scaleX(0.852);">-4,267</div>
<div style="position:absolute;top:305.94px;font-size:13.8px;line-height:13.8px;white-space:nowrap;color:#000;font-weight:bold;right:775.50px;transform-origin:100% 0;transform:scaleX(0.852);">6,479</div>
<div style="position:absolute;top:305.94px;font-size:13.8px;line-height:13.8px;white-space:nowrap;color:#000;font-weight:bold;right:705.20px;transform-origin:100% 0;transform:scaleX(0.852);">10,267</div>
<div style="position:absolute;top:305.94px;font-size:13.8px;line-height:13.8px;white-space:nowrap;color:#000;font-weight:bold;right:636.10px;transform-origin:100% 0;transform:scaleX(0.852);">17,106</div>
<div style="position:absolute;top:305.94px;font-size:13.8px;line-height:13.8px;white-space:nowrap;color:#000;font-weight:bold;right:566.40px;transform-origin:100% 0;transform:scaleX(0.852);">23,532</div>
<div style="position:absolute;top:305.94px;font-size:13.8px;line-height:13.8px;white-space:nowrap;color:#000;font-weight:bold;right:497.10px;transform-origin:100% 0;transform:scaleX(0.852);">26,464</div>
<div style="position:absolute;top:305.94px;font-size:13.8px;line-height:13.8px;white-space:nowrap;color:#000;font-weight:bold;right:427.30px;transform-origin:100% 0;transform:scaleX(0.852);">35,636</div>
<div style="position:absolute;top:305.94px;font-size:13.8px;line-height:13.8px;white-space:nowrap;color:#000;font-weight:bold;right:357.90px;transform-origin:100% 0;transform:scaleX(0.852);">37,875</div>
<div style="position:absolute;top:305.94px;font-size:13.8px;line-height:13.8px;white-space:nowrap;color:#000;font-weight:bold;right:288.60px;transform-origin:100% 0;transform:scaleX(0.852);">42,387</div>
<div style="position:absolute;top:305.94px;font-size:13.8px;line-height:13.8px;white-space:nowrap;color:#000;font-weight:bold;right:218.60px;transform-origin:100% 0;transform:scaleX(0.852);">55,483</div>
<div style="position:absolute;top:305.94px;font-size:13.8px;line-height:13.8px;white-space:nowrap;color:#000;font-weight:bold;right:149.00px;transform-origin:100% 0;transform:scaleX(0.852);">62,299</div>
<div style="position:absolute;top:305.94px;font-size:13.8px;line-height:13.8px;white-space:nowrap;color:#000;font-weight:bold;right:79.60px;transform-origin:100% 0;transform:scaleX(0.852);">65,018</div>
<div style="position:absolute;top:342.82px;font-size:13.8px;line-height:13.8px;white-space:nowrap;color:#000;left:27.00px;transform-origin:0 0;transform:scaleX(0.842);">EBIT</div>
<div style="position:absolute;top:342.82px;font-size:13.8px;line-height:13.8px;white-space:nowrap;color:#000;right:1127.80px;transform-origin:100% 0;transform:scaleX(0.842);">745</div>
<div style="position:absolute;top:342.82px;font-size:13.8px;line-height:13.8px;white-space:nowrap;color:#000;right:1056.80px;transform-origin:100% 0;transform:scaleX(0.842);">178</div>
<div style="position:absolute;top:342.82px;font-size:13.8px;line-height:13.8px;white-space:nowrap;color:#000;right:985.30px;transform-origin:100% 0;transform:scaleX(0.842);">2,233</div>
<div style="position:absolute;top:342.82px;font-size:13.8px;line-height:13.8px;white-space:nowrap;color:#000;right:914.30px;transform-origin:100% 0;transform:scaleX(0.842);">4,186</div>
<div style="position:absolute;top:342.82px;font-size:13.8px;line-height:13.8px;white-space:nowrap;color:#000;right:844.30px;transform-origin:100% 0;transform:scaleX(0.842);">4,106</div>
<div style="position:absolute;top:342.82px;font-size:13.8px;line-height:13.8px;white-space:nowrap;color:#000;right:775.00px;transform-origin:100% 0;transform:scaleX(0.842);">8,605</div>
<div style="position:absolute;top:342.82px;font-size:13.8px;line-height:13.8px;white-space:nowrap;color:#000;right:704.70px;transform-origin:100% 0;transform:scaleX(0.842);">9,013</div>
<div style="position:absolute;top:342.82px;font-size:13.8px;line-height:13.8px;white-space:nowrap;color:#000;right:635.60px;transform-origin:100% 0;transform:scaleX(0.842);">15,266</div>
<div style="position:absolute;top:342.82px;font-size:13.8px;line-height:13.8px;white-space:nowrap;color:#000;right:565.90px;transform-origin:100% 0;transform:scaleX(0.842);">17,525</div>
<div style="position:absolute;top:342.82px;font-size:13.8px;line-height:13.8px;white-space:nowrap;color:#000;right:496.60px;transform-origin:100% 0;transform:scaleX(0.842);">22,828</div>
<div style="position:absolute;top:342.82px;font-size:13.8px;line-height:13.8px;white-space:nowrap;color:#000;right:426.80px;transform-origin:100% 0;transform:scaleX(0.842);">26,879</div>
<div style="position:absolute;top:342.82px;font-size:13.8px;line-height:13.8px;white-space:nowrap;color:#000;right:357.40px;transform-origin:100% 0;transform:scaleX(0.842);">26,017</div>
<div style="position:absolute;top:342.82px;font-size:13.8px;line-height:13.8px;white-space:nowrap;color:#000;right:288.10px;transform-origin:100% 0;transform:scaleX(0.842);">28,823</div>
<div style="position:absolute;top:342.82px;font-size:13.8px;line-height:13.8px;white-space:nowrap;color:#000;right:218.10px;transform-origin:100% 0;transform:scaleX(0.842);">37,150</div>
<div style="position:absolute;top:342.82px;font-size:13.8px;line-height:13.8px;white-space:nowrap;color:#000;right:148.50px;transform-origin:100% 0;transform:scaleX(0.842);">41,792</div>
<div style="position:absolute;top:342.82px;font-size:13.8px;line-height:13.8px;white-space:nowrap;color:#000;right:79.10px;transform-origin:100% 0;transform:scaleX(0.842);">49,572</div>
<div style="position:absolute;top:361.26px;font-size:13.8px;line-height:13.8px;white-space:nowrap;color:#000;left:27.00px;transform-origin:0 0;transform:scaleX(0.842);">D&amp;A</div>
<div style="position:absolute;top:361.26px;font-size:13.8px;line-height:13.8px;white-space:nowrap;color:#000;right:1127.80px;transform-origin:100% 0;transform:scaleX(0.842);">3,253</div>
<div style="position:absolute;top:361.26px;font-size:13.8px;line-height:13.8px;white-space:nowrap;color:#000;right:1056.80px;transform-origin:100% 0;transform:scaleX(0.842);">4,746</div>
<div style="position:absolute;top:361.26px;font-size:13.8px;line-height:13.8px;white-space:nowrap;color:#000;right:985.30px;transform-origin:100% 0;transform:scaleX(0.842);">6,281</div>
<div style="position:absolute;top:361.26px;font-size:13.8px;line-height:13.8px;white-space:nowrap;color:#000;right:914.30px;transform-origin:100% 0;transform:scaleX(0.842);">8,116</div>
<div style="position:absolute;top:361.26px;font-size:13.8px;line-height:13.8px;white-space:nowrap;color:#000;right:844.30px;transform-origin:100% 0;transform:scaleX(0.842);">11,478</div>
<div style="position:absolute;top:361.26px;font-size:13.8px;line-height:13.8px;white-space:nowrap;color:#000;right:775.00px;transform-origin:100% 0;transform:scaleX(0.842);">19,546</div>
<div style="position:absolute;top:361.26px;font-size:13.8px;line-height:13.8px;white-space:nowrap;color:#000;right:704.70px;transform-origin:100% 0;transform:scaleX(0.842);">25,566</div>
<div style="position:absolute;top:361.26px;font-size:13.8px;line-height:13.8px;white-space:nowrap;color:#000;right:635.60px;transform-origin:100% 0;transform:scaleX(0.842);">30,968</div>
<div style="position:absolute;top:361.26px;font-size:13.8px;line-height:13.8px;white-space:nowrap;color:#000;right:565.90px;transform-origin:100% 0;transform:scaleX(0.842);">36,337</div>
<div style="position:absolute;top:361.26px;font-size:13.8px;line-height:13.8px;white-space:nowrap;color:#000;right:496.60px;transform-origin:100% 0;transform:scaleX(0.842);">41,392</div>
<div style="position:absolute;top:361.26px;font-size:13.8px;line-height:13.8px;white-space:nowrap;color:#000;right:426.80px;transform-origin:100% 0;transform:scaleX(0.842);">47,974</div>
<div style="position:absolute;top:361.26px;font-size:13.8px;line-height:13.8px;white-space:nowrap;color:#000;right:357.40px;transform-origin:100% 0;transform:scaleX(0.842);">52,874</div>
<div style="position:absolute;top:361.26px;font-size:13.8px;line-height:13.8px;white-space:nowrap;color:#000;right:288.10px;transform-origin:100% 0;transform:scaleX(0.842);">57,287</div>
<div style="position:absolute;top:361.26px;font-size:13.8px;line-height:13.8px;white-space:nowrap;color:#000;right:218.10px;transform-origin:100% 0;transform:scaleX(0.842);">60,841</div>
<div style="position:absolute;top:361.26px;font-size:13.8px;line-height:13.8px;white-space:nowrap;color:#000;right:148.50px;transform-origin:100% 0;transform:scaleX(0.842);">61,938</div>
<div style="position:absolute;top:361.26px;font-size:13.8px;line-height:13.8px;white-space:nowrap;color:#000;right:79.10px;transform-origin:100% 0;transform:scaleX(0.842);">62,285</div>
<div style="position:absolute;left:25.30px;top:376.00px;width:1433.90px;height:1.00px;background:#6a6a6a;"></div>
<div style="position:absolute;top:379.70px;font-size:13.8px;line-height:13.8px;white-space:nowrap;color:#000;font-weight:bold;left:27.00px;transform-origin:0 0;transform:scaleX(0.852);">EBITDA (Including SBC)</div>
<div style="position:absolute;top:379.70px;font-size:13.8px;line-height:13.8px;white-space:nowrap;color:#000;font-weight:bold;right:1128.30px;transform-origin:100% 0;transform:scaleX(0.852);">3,998</div>
<div style="position:absolute;top:379.70px;font-size:13.8px;line-height:13.8px;white-space:nowrap;color:#000;font-weight:bold;right:1057.30px;transform-origin:100% 0;transform:scaleX(0.852);">4,924</div>
<div style="position:absolute;top:379.70px;font-size:13.8px;line-height:13.8px;white-space:nowrap;color:#000;font-weight:bold;right:985.80px;transform-origin:100% 0;transform:scaleX(0.852);">8,514</div>
<div style="position:absolute;top:379.70px;font-size:13.8px;line-height:13.8px;white-space:nowrap;color:#000;font-weight:bold;right:914.80px;transform-origin:100% 0;transform:scaleX(0.852);">12,302</div>
<div style="position:absolute;top:379.70px;font-size:13.8px;line-height:13.8px;white-space:nowrap;color:#000;font-weight:bold;right:844.80px;transform-origin:100% 0;transform:scaleX(0.852);">15,584</div>
<div style="position:absolute;top:379.70px;font-size:13.8px;line-height:13.8px;white-space:nowrap;color:#000;font-weight:bold;right:775.50px;transform-origin:100% 0;transform:scaleX(0.852);">28,151</div>
<div style="position:absolute;top:379.70px;font-size:13.8px;line-height:13.8px;white-space:nowrap;color:#000;font-weight:bold;right:705.20px;transform-origin:100% 0;transform:scaleX(0.852);">34,579</div>
<div style="position:absolute;top:379.70px;font-size:13.8px;line-height:13.8px;white-space:nowrap;color:#000;font-weight:bold;right:636.10px;transform-origin:100% 0;transform:scaleX(0.852);">46,234</div>
<div style="position:absolute;top:379.70px;font-size:13.8px;line-height:13.8px;white-space:nowrap;color:#000;font-weight:bold;right:566.40px;transform-origin:100% 0;transform:scaleX(0.852);">53,862</div>
<div style="position:absolute;top:379.70px;font-size:13.8px;line-height:13.8px;white-space:nowrap;color:#000;font-weight:bold;right:497.10px;transform-origin:100% 0;transform:scaleX(0.852);">64,221</div>
<div style="position:absolute;top:379.70px;font-size:13.8px;line-height:13.8px;white-space:nowrap;color:#000;font-weight:bold;right:427.30px;transform-origin:100% 0;transform:scaleX(0.852);">74,852</div>
<div style="position:absolute;top:379.70px;font-size:13.8px;line-height:13.8px;white-space:nowrap;color:#000;font-weight:bold;right:357.90px;transform-origin:100% 0;transform:scaleX(0.852);">78,891</div>
<div style="position:absolute;top:379.70px;font-size:13.8px;line-height:13.8px;white-space:nowrap;color:#000;font-weight:bold;right:288.60px;transform-origin:100% 0;transform:scaleX(0.852);">86,110</div>
<div style="position:absolute;top:379.70px;font-size:13.8px;line-height:13.8px;white-space:nowrap;color:#000;font-weight:bold;right:218.60px;transform-origin:100% 0;transform:scaleX(0.852);">97,991</div>
<div style="position:absolute;top:379.70px;font-size:13.8px;line-height:13.8px;white-space:nowrap;color:#000;font-weight:bold;right:149.00px;transform-origin:100% 0;transform:scaleX(0.852);">103,730</div>
<div style="position:absolute;top:379.70px;font-size:13.8px;line-height:13.8px;white-space:nowrap;color:#000;font-weight:bold;right:79.60px;transform-origin:100% 0;transform:scaleX(0.852);">111,857</div>
<div style="position:absolute;top:416.58px;font-size:13.8px;line-height:13.8px;white-space:nowrap;color:#000;left:27.00px;transform-origin:0 0;transform:scaleX(0.842);">Stock-Based Compensation (SBC)</div>
<div style="position:absolute;top:416.58px;font-size:13.8px;line-height:13.8px;white-space:nowrap;color:#000;right:1127.80px;transform-origin:100% 0;transform:scaleX(0.842);">1,134</div>
<div style="position:absolute;top:416.58px;font-size:13.8px;line-height:13.8px;white-space:nowrap;color:#000;right:1056.80px;transform-origin:100% 0;transform:scaleX(0.842);">1,497</div>
<div style="position:absolute;top:416.58px;font-size:13.8px;line-height:13.8px;white-space:nowrap;color:#000;right:985.30px;transform-origin:100% 0;transform:scaleX(0.842);">2,119</div>
<div style="position:absolute;top:416.58px;font-size:13.8px;line-height:13.8px;white-space:nowrap;color:#000;right:914.30px;transform-origin:100% 0;transform:scaleX(0.842);">2,975</div>
<div style="position:absolute;top:416.58px;font-size:13.8px;line-height:13.8px;white-space:nowrap;color:#000;right:844.30px;transform-origin:100% 0;transform:scaleX(0.842);">4,215</div>
<div style="position:absolute;top:416.58px;font-size:13.8px;line-height:13.8px;white-space:nowrap;color:#000;right:775.00px;transform-origin:100% 0;transform:scaleX(0.842);">5,735</div>
<div style="position:absolute;top:416.58px;font-size:13.8px;line-height:13.8px;white-space:nowrap;color:#000;right:704.70px;transform-origin:100% 0;transform:scaleX(0.842);">7,349</div>
<div style="position:absolute;top:416.58px;font-size:13.8px;line-height:13.8px;white-space:nowrap;color:#000;right:635.60px;transform-origin:100% 0;transform:scaleX(0.842);">9,150</div>
<div style="position:absolute;top:416.58px;font-size:13.8px;line-height:13.8px;white-space:nowrap;color:#000;right:565.90px;transform-origin:100% 0;transform:scaleX(0.842);">11,070</div>
<div style="position:absolute;top:416.58px;font-size:13.8px;line-height:13.8px;white-space:nowrap;color:#000;right:496.60px;transform-origin:100% 0;transform:scaleX(0.842);">13,109</div>
<div style="position:absolute;top:416.58px;font-size:13.8px;line-height:13.8px;white-space:nowrap;color:#000;right:426.80px;transform-origin:100% 0;transform:scaleX(0.842);">14,962</div>
<div style="position:absolute;top:416.58px;font-size:13.8px;line-height:13.8px;white-space:nowrap;color:#000;right:357.40px;transform-origin:100% 0;transform:scaleX(0.842);">16,757</div>
<div style="position:absolute;top:416.58px;font-size:13.8px;line-height:13.8px;white-space:nowrap;color:#000;right:288.10px;transform-origin:100% 0;transform:scaleX(0.842);">18,289</div>
<div style="position:absolute;top:416.58px;font-size:13.8px;line-height:13.8px;white-space:nowrap;color:#000;right:218.10px;transform-origin:100% 0;transform:scaleX(0.842);">19,633</div>
<div style="position:absolute;top:416.58px;font-size:13.8px;line-height:13.8px;white-space:nowrap;color:#000;right:148.50px;transform-origin:100% 0;transform:scaleX(0.842);">20,820</div>
<div style="position:absolute;top:416.58px;font-size:13.8px;line-height:13.8px;white-space:nowrap;color:#000;right:79.10px;transform-origin:100% 0;transform:scaleX(0.842);">21,953</div>
<div style="position:absolute;left:25.30px;top:431.00px;width:1433.90px;height:1.00px;background:#6a6a6a;"></div>
<div style="position:absolute;top:435.02px;font-size:13.8px;line-height:13.8px;white-space:nowrap;color:#000;font-weight:bold;left:27.00px;transform-origin:0 0;transform:scaleX(0.852);">EBITDA (Excluding SBC)</div>
<div style="position:absolute;top:435.02px;font-size:13.8px;line-height:13.8px;white-space:nowrap;color:#000;font-weight:bold;right:1128.30px;transform-origin:100% 0;transform:scaleX(0.852);">5,132</div>
<div style="position:absolute;top:435.02px;font-size:13.8px;line-height:13.8px;white-space:nowrap;color:#000;font-weight:bold;right:1057.30px;transform-origin:100% 0;transform:scaleX(0.852);">6,421</div>
<div style="position:absolute;top:435.02px;font-size:13.8px;line-height:13.8px;white-space:nowrap;color:#000;font-weight:bold;right:985.80px;transform-origin:100% 0;transform:scaleX(0.852);">10,633</div>
<div style="position:absolute;top:435.02px;font-size:13.8px;line-height:13.8px;white-space:nowrap;color:#000;font-weight:bold;right:914.80px;transform-origin:100% 0;transform:scaleX(0.852);">15,277</div>
<div style="position:absolute;top:435.02px;font-size:13.8px;line-height:13.8px;white-space:nowrap;color:#000;font-weight:bold;right:844.80px;transform-origin:100% 0;transform:scaleX(0.852);">19,799</div>
<div style="position:absolute;top:435.02px;font-size:13.8px;line-height:13.8px;white-space:nowrap;color:#000;font-weight:bold;right:775.50px;transform-origin:100% 0;transform:scaleX(0.852);">33,886</div>
<div style="position:absolute;top:435.02px;font-size:13.8px;line-height:13.8px;white-space:nowrap;color:#000;font-weight:bold;right:705.20px;transform-origin:100% 0;transform:scaleX(0.852);">41,928</div>
<div style="position:absolute;top:435.02px;font-size:13.8px;line-height:13.8px;white-space:nowrap;color:#000;font-weight:bold;right:636.10px;transform-origin:100% 0;transform:scaleX(0.852);">55,384</div>
<div style="position:absolute;top:435.02px;font-size:13.8px;line-height:13.8px;white-space:nowrap;color:#000;font-weight:bold;right:566.40px;transform-origin:100% 0;transform:scaleX(0.852);">64,932</div>
<div style="position:absolute;top:435.02px;font-size:13.8px;line-height:13.8px;white-space:nowrap;color:#000;font-weight:bold;right:497.10px;transform-origin:100% 0;transform:scaleX(0.852);">77,330</div>
<div style="position:absolute;top:435.02px;font-size:13.8px;line-height:13.8px;white-space:nowrap;color:#000;font-weight:bold;right:427.30px;transform-origin:100% 0;transform:scaleX(0.852);">89,815</div>
<div style="position:absolute;top:435.02px;font-size:13.8px;line-height:13.8px;white-space:nowrap;color:#000;font-weight:bold;right:357.90px;transform-origin:100% 0;transform:scaleX(0.852);">95,648</div>
<div style="position:absolute;top:435.02px;font-size:13.8px;line-height:13.8px;white-space:nowrap;color:#000;font-weight:bold;right:288.60px;transform-origin:100% 0;transform:scaleX(0.852);">104,398</div>
<div style="position:absolute;top:435.02px;font-size:13.8px;line-height:13.8px;white-space:nowrap;color:#000;font-weight:bold;right:218.60px;transform-origin:100% 0;transform:scaleX(0.852);">117,624</div>
<div style="position:absolute;top:435.02px;font-size:13.8px;line-height:13.8px;white-space:nowrap;color:#000;font-weight:bold;right:149.00px;transform-origin:100% 0;transform:scaleX(0.852);">124,550</div>
<div style="position:absolute;top:435.02px;font-size:13.8px;line-height:13.8px;white-space:nowrap;color:#000;font-weight:bold;right:79.60px;transform-origin:100% 0;transform:scaleX(0.852);">133,810</div>
<div style="position:absolute;top:471.90px;font-size:13.8px;line-height:13.8px;white-space:nowrap;color:#000;font-weight:bold;left:27.00px;transform-origin:0 0;transform:scaleX(0.852);">Free Cash Flow to Firm (FCFF)</div>
<div style="position:absolute;top:490.34px;font-size:13.8px;line-height:13.8px;white-space:nowrap;color:#000;left:27.00px;transform-origin:0 0;transform:scaleX(0.842);">Operating Profit</div>
<div style="position:absolute;top:490.34px;font-size:13.8px;line-height:13.8px;white-space:nowrap;color:#000;right:1127.80px;transform-origin:100% 0;transform:scaleX(0.842);">745</div>
<div style="position:absolute;top:490.34px;font-size:13.8px;line-height:13.8px;white-space:nowrap;color:#000;right:1056.80px;transform-origin:100% 0;transform:scaleX(0.842);">178</div>
<div style="position:absolute;top:490.34px;font-size:13.8px;line-height:13.8px;white-space:nowrap;color:#000;right:985.30px;transform-origin:100% 0;transform:scaleX(0.842);">2,233</div>
<div style="position:absolute;top:490.34px;font-size:13.8px;line-height:13.8px;white-space:nowrap;color:#000;right:914.30px;transform-origin:100% 0;transform:scaleX(0.842);">4,186</div>
<div style="position:absolute;top:490.34px;font-size:13.8px;line-height:13.8px;white-space:nowrap;color:#000;right:844.30px;transform-origin:100% 0;transform:scaleX(0.842);">4,106</div>
<div style="position:absolute;top:490.34px;font-size:13.8px;line-height:13.8px;white-space:nowrap;color:#000;right:775.00px;transform-origin:100% 0;transform:scaleX(0.842);">8,605</div>
<div style="position:absolute;top:490.34px;font-size:13.8px;line-height:13.8px;white-space:nowrap;color:#000;right:704.70px;transform-origin:100% 0;transform:scaleX(0.842);">9,013</div>
<div style="position:absolute;top:490.34px;font-size:13.8px;line-height:13.8px;white-space:nowrap;color:#000;right:635.60px;transform-origin:100% 0;transform:scaleX(0.842);">15,266</div>
<div style="position:absolute;top:490.34px;font-size:13.8px;line-height:13.8px;white-space:nowrap;color:#000;right:565.90px;transform-origin:100% 0;transform:scaleX(0.842);">17,525</div>
<div style="position:absolute;top:490.34px;font-size:13.8px;line-height:13.8px;white-space:nowrap;color:#000;right:496.60px;transform-origin:100% 0;transform:scaleX(0.842);">22,828</div>
<div style="position:absolute;top:490.34px;font-size:13.8px;line-height:13.8px;white-space:nowrap;color:#000;right:426.80px;transform-origin:100% 0;transform:scaleX(0.842);">26,879</div>
<div style="position:absolute;top:490.34px;font-size:13.8px;line-height:13.8px;white-space:nowrap;color:#000;right:357.40px;transform-origin:100% 0;transform:scaleX(0.842);">26,017</div>
<div style="position:absolute;top:490.34px;font-size:13.8px;line-height:13.8px;white-space:nowrap;color:#000;right:288.10px;transform-origin:100% 0;transform:scaleX(0.842);">28,823</div>
<div style="position:absolute;top:490.34px;font-size:13.8px;line-height:13.8px;white-space:nowrap;color:#000;right:218.10px;transform-origin:100% 0;transform:scaleX(0.842);">37,150</div>
<div style="position:absolute;top:490.34px;font-size:13.8px;line-height:13.8px;white-space:nowrap;color:#000;right:148.50px;transform-origin:100% 0;transform:scaleX(0.842);">41,792</div>
<div style="position:absolute;top:490.34px;font-size:13.8px;line-height:13.8px;white-space:nowrap;color:#000;right:79.10px;transform-origin:100% 0;transform:scaleX(0.842);">49,572</div>
<div style="position:absolute;top:508.78px;font-size:13.8px;line-height:13.8px;white-space:nowrap;color:#000;left:27.00px;transform-origin:0 0;transform:scaleX(0.842);">Less: Unlevered Taxes</div>
<div style="position:absolute;top:508.78px;font-size:13.8px;line-height:13.8px;white-space:nowrap;color:#000;right:1127.80px;transform-origin:100% 0;transform:scaleX(0.842);">-237</div>
<div style="position:absolute;top:508.78px;font-size:13.8px;line-height:13.8px;white-space:nowrap;color:#000;right:1056.80px;transform-origin:100% 0;transform:scaleX(0.842);">0</div>
<div style="position:absolute;top:508.78px;font-size:13.8px;line-height:13.8px;white-space:nowrap;color:#000;right:985.30px;transform-origin:100% 0;transform:scaleX(0.842);">-1,353</div>
<div style="position:absolute;top:508.78px;font-size:13.8px;line-height:13.8px;white-space:nowrap;color:#000;right:914.30px;transform-origin:100% 0;transform:scaleX(0.842);">-1,533</div>
<div style="position:absolute;top:508.78px;font-size:13.8px;line-height:13.8px;white-space:nowrap;color:#000;right:844.30px;transform-origin:100% 0;transform:scaleX(0.842);">-830</div>
<div style="position:absolute;top:508.78px;font-size:13.8px;line-height:13.8px;white-space:nowrap;color:#000;right:775.00px;transform-origin:100% 0;transform:scaleX(0.842);">-1,721</div>
<div style="position:absolute;top:508.78px;font-size:13.8px;line-height:13.8px;white-space:nowrap;color:#000;right:704.70px;transform-origin:100% 0;transform:scaleX(0.842);">-1,803</div>
<div style="position:absolute;top:508.78px;font-size:13.8px;line-height:13.8px;white-space:nowrap;color:#000;right:635.60px;transform-origin:100% 0;transform:scaleX(0.842);">-3,435</div>
<div style="position:absolute;top:508.78px;font-size:13.8px;line-height:13.8px;white-space:nowrap;color:#000;right:565.90px;transform-origin:100% 0;transform:scaleX(0.842);">-3,943</div>
<div style="position:absolute;top:508.78px;font-size:13.8px;line-height:13.8px;white-space:nowrap;color:#000;right:496.60px;transform-origin:100% 0;transform:scaleX(0.842);">-5,136</div>
<div style="position:absolute;top:508.78px;font-size:13.8px;line-height:13.8px;white-space:nowrap;color:#000;right:426.80px;transform-origin:100% 0;transform:scaleX(0.842);">-6,048</div>
<div style="position:absolute;top:508.78px;font-size:13.8px;line-height:13.8px;white-space:nowrap;color:#000;right:357.40px;transform-origin:100% 0;transform:scaleX(0.842);">-5,854</div>
<div style="position:absolute;top:508.78px;font-size:13.8px;line-height:13.8px;white-space:nowrap;color:#000;right:288.10px;transform-origin:100% 0;transform:scaleX(0.842);">-6,485</div>
<div style="position:absolute;top:508.78px;font-size:13.8px;line-height:13.8px;white-space:nowrap;color:#000;right:218.10px;transform-origin:100% 0;transform:scaleX(0.842);">-8,359</div>
<div style="position:absolute;top:508.78px;font-size:13.8px;line-height:13.8px;white-space:nowrap;color:#000;right:148.50px;transform-origin:100% 0;transform:scaleX(0.842);">-9,403</div>
<div style="position:absolute;top:508.78px;font-size:13.8px;line-height:13.8px;white-space:nowrap;color:#000;right:79.10px;transform-origin:100% 0;transform:scaleX(0.842);">-11,154</div>
<div style="position:absolute;left:25.30px;top:523.00px;width:1433.90px;height:1.00px;background:#6a6a6a;"></div>
<div style="position:absolute;top:527.22px;font-size:13.8px;line-height:13.8px;white-space:nowrap;color:#000;font-weight:bold;left:27.00px;transform-origin:0 0;transform:scaleX(0.852);">Net Operating Profit After Tax (NOPAT)</div>
<div style="position:absolute;top:527.22px;font-size:13.8px;line-height:13.8px;white-space:nowrap;color:#000;font-weight:bold;right:1128.30px;transform-origin:100% 0;transform:scaleX(0.852);">508</div>
<div style="position:absolute;top:527.22px;font-size:13.8px;line-height:13.8px;white-space:nowrap;color:#000;font-weight:bold;right:1057.30px;transform-origin:100% 0;transform:scaleX(0.852);">178</div>
<div style="position:absolute;top:527.22px;font-size:13.8px;line-height:13.8px;white-space:nowrap;color:#000;font-weight:bold;right:985.80px;transform-origin:100% 0;transform:scaleX(0.852);">880</div>
<div style="position:absolute;top:527.22px;font-size:13.8px;line-height:13.8px;white-space:nowrap;color:#000;font-weight:bold;right:914.80px;transform-origin:100% 0;transform:scaleX(0.852);">2,653</div>
<div style="position:absolute;top:527.22px;font-size:13.8px;line-height:13.8px;white-space:nowrap;color:#000;font-weight:bold;right:844.80px;transform-origin:100% 0;transform:scaleX(0.852);">3,276</div>
<div style="position:absolute;top:527.22px;font-size:13.8px;line-height:13.8px;white-space:nowrap;color:#000;font-weight:bold;right:775.50px;transform-origin:100% 0;transform:scaleX(0.852);">6,884</div>
<div style="position:absolute;top:527.22px;font-size:13.8px;line-height:13.8px;white-space:nowrap;color:#000;font-weight:bold;right:705.20px;transform-origin:100% 0;transform:scaleX(0.852);">7,211</div>
<div style="position:absolute;top:527.22px;font-size:13.8px;line-height:13.8px;white-space:nowrap;color:#000;font-weight:bold;right:636.10px;transform-origin:100% 0;transform:scaleX(0.852);">11,831</div>
<div style="position:absolute;top:527.22px;font-size:13.8px;line-height:13.8px;white-space:nowrap;color:#000;font-weight:bold;right:566.40px;transform-origin:100% 0;transform:scaleX(0.852);">13,582</div>
<div style="position:absolute;top:527.22px;font-size:13.8px;line-height:13.8px;white-space:nowrap;color:#000;font-weight:bold;right:497.10px;transform-origin:100% 0;transform:scaleX(0.852);">17,692</div>
<div style="position:absolute;top:527.22px;font-size:13.8px;line-height:13.8px;white-space:nowrap;color:#000;font-weight:bold;right:427.30px;transform-origin:100% 0;transform:scaleX(0.852);">20,831</div>
<div style="position:absolute;top:527.22px;font-size:13.8px;line-height:13.8px;white-space:nowrap;color:#000;font-weight:bold;right:357.90px;transform-origin:100% 0;transform:scaleX(0.852);">20,163</div>
<div style="position:absolute;top:527.22px;font-size:13.8px;line-height:13.8px;white-space:nowrap;color:#000;font-weight:bold;right:288.60px;transform-origin:100% 0;transform:scaleX(0.852);">22,338</div>
<div style="position:absolute;top:527.22px;font-size:13.8px;line-height:13.8px;white-space:nowrap;color:#000;font-weight:bold;right:218.60px;transform-origin:100% 0;transform:scaleX(0.852);">28,792</div>
<div style="position:absolute;top:527.22px;font-size:13.8px;line-height:13.8px;white-space:nowrap;color:#000;font-weight:bold;right:149.00px;transform-origin:100% 0;transform:scaleX(0.852);">32,388</div>
<div style="position:absolute;top:527.22px;font-size:13.8px;line-height:13.8px;white-space:nowrap;color:#000;font-weight:bold;right:79.60px;transform-origin:100% 0;transform:scaleX(0.852);">38,418</div>
<div style="position:absolute;top:545.66px;font-size:13.8px;line-height:13.8px;white-space:nowrap;color:#000;left:27.00px;transform-origin:0 0;transform:scaleX(0.842);">Plus: Depreciation &amp; Amortization</div>
<div style="position:absolute;top:545.66px;font-size:13.8px;line-height:13.8px;white-space:nowrap;color:#000;right:1127.80px;transform-origin:100% 0;transform:scaleX(0.842);">3,253</div>
<div style="position:absolute;top:545.66px;font-size:13.8px;line-height:13.8px;white-space:nowrap;color:#000;right:1056.80px;transform-origin:100% 0;transform:scaleX(0.842);">4,746</div>
<div style="position:absolute;top:545.66px;font-size:13.8px;line-height:13.8px;white-space:nowrap;color:#000;right:985.30px;transform-origin:100% 0;transform:scaleX(0.842);">6,281</div>
<div style="position:absolute;top:545.66px;font-size:13.8px;line-height:13.8px;white-space:nowrap;color:#000;right:914.30px;transform-origin:100% 0;transform:scaleX(0.842);">8,116</div>
<div style="position:absolute;top:545.66px;font-size:13.8px;line-height:13.8px;white-space:nowrap;color:#000;right:844.30px;transform-origin:100% 0;transform:scaleX(0.842);">11,478</div>
<div style="position:absolute;top:545.66px;font-size:13.8px;line-height:13.8px;white-space:nowrap;color:#000;right:775.00px;transform-origin:100% 0;transform:scaleX(0.842);">19,546</div>
<div style="position:absolute;top:545.66px;font-size:13.8px;line-height:13.8px;white-space:nowrap;color:#000;right:704.70px;transform-origin:100% 0;transform:scaleX(0.842);">25,566</div>
<div style="position:absolute;top:545.66px;font-size:13.8px;line-height:13.8px;white-space:nowrap;color:#000;right:635.60px;transform-origin:100% 0;transform:scaleX(0.842);">30,968</div>
<div style="position:absolute;top:545.66px;font-size:13.8px;line-height:13.8px;white-space:nowrap;color:#000;right:565.90px;transform-origin:100% 0;transform:scaleX(0.842);">36,337</div>
<div style="position:absolute;top:545.66px;font-size:13.8px;line-height:13.8px;white-space:nowrap;color:#000;right:496.60px;transform-origin:100% 0;transform:scaleX(0.842);">41,392</div>
<div style="position:absolute;top:545.66px;font-size:13.8px;line-height:13.8px;white-space:nowrap;color:#000;right:426.80px;transform-origin:100% 0;transform:scaleX(0.842);">47,974</div>
<div style="position:absolute;top:545.66px;font-size:13.8px;line-height:13.8px;white-space:nowrap;color:#000;right:357.40px;transform-origin:100% 0;transform:scaleX(0.842);">52,874</div>
<div style="position:absolute;top:545.66px;font-size:13.8px;line-height:13.8px;white-space:nowrap;color:#000;right:288.10px;transform-origin:100% 0;transform:scaleX(0.842);">57,287</div>
<div style="position:absolute;top:545.66px;font-size:13.8px;line-height:13.8px;white-space:nowrap;color:#000;right:218.10px;transform-origin:100% 0;transform:scaleX(0.842);">60,841</div>
<div style="position:absolute;top:545.66px;font-size:13.8px;line-height:13.8px;white-space:nowrap;color:#000;right:148.50px;transform-origin:100% 0;transform:scaleX(0.842);">61,938</div>
<div style="position:absolute;top:545.66px;font-size:13.8px;line-height:13.8px;white-space:nowrap;color:#000;right:79.10px;transform-origin:100% 0;transform:scaleX(0.842);">62,285</div>
<div style="position:absolute;top:564.10px;font-size:13.8px;line-height:13.8px;white-space:nowrap;color:#000;left:27.00px;transform-origin:0 0;transform:scaleX(0.842);">Plus: Stock-Based Compensation</div>
<div style="position:absolute;top:564.10px;font-size:13.8px;line-height:13.8px;white-space:nowrap;color:#000;right:1127.80px;transform-origin:100% 0;transform:scaleX(0.842);">1,134</div>
<div style="position:absolute;top:564.10px;font-size:13.8px;line-height:13.8px;white-space:nowrap;color:#000;right:1056.80px;transform-origin:100% 0;transform:scaleX(0.842);">1,497</div>
<div style="position:absolute;top:564.10px;font-size:13.8px;line-height:13.8px;white-space:nowrap;color:#000;right:985.30px;transform-origin:100% 0;transform:scaleX(0.842);">2,119</div>
<div style="position:absolute;top:564.10px;font-size:13.8px;line-height:13.8px;white-space:nowrap;color:#000;right:914.30px;transform-origin:100% 0;transform:scaleX(0.842);">2,975</div>
<div style="position:absolute;top:564.10px;font-size:13.8px;line-height:13.8px;white-space:nowrap;color:#000;right:844.30px;transform-origin:100% 0;transform:scaleX(0.842);">4,215</div>
<div style="position:absolute;top:564.10px;font-size:13.8px;line-height:13.8px;white-space:nowrap;color:#000;right:775.00px;transform-origin:100% 0;transform:scaleX(0.842);">5,735</div>
<div style="position:absolute;top:564.10px;font-size:13.8px;line-height:13.8px;white-space:nowrap;color:#000;right:704.70px;transform-origin:100% 0;transform:scaleX(0.842);">7,349</div>
<div style="position:absolute;top:564.10px;font-size:13.8px;line-height:13.8px;white-space:nowrap;color:#000;right:635.60px;transform-origin:100% 0;transform:scaleX(0.842);">9,150</div>
<div style="position:absolute;top:564.10px;font-size:13.8px;line-height:13.8px;white-space:nowrap;color:#000;right:565.90px;transform-origin:100% 0;transform:scaleX(0.842);">11,070</div>
<div style="position:absolute;top:564.10px;font-size:13.8px;line-height:13.8px;white-space:nowrap;color:#000;right:496.60px;transform-origin:100% 0;transform:scaleX(0.842);">13,109</div>
<div style="position:absolute;top:564.10px;font-size:13.8px;line-height:13.8px;white-space:nowrap;color:#000;right:426.80px;transform-origin:100% 0;transform:scaleX(0.842);">14,962</div>
<div style="position:absolute;top:564.10px;font-size:13.8px;line-height:13.8px;white-space:nowrap;color:#000;right:357.40px;transform-origin:100% 0;transform:scaleX(0.842);">16,757</div>
<div style="position:absolute;top:564.10px;font-size:13.8px;line-height:13.8px;white-space:nowrap;color:#000;right:288.10px;transform-origin:100% 0;transform:scaleX(0.842);">18,289</div>
<div style="position:absolute;top:564.10px;font-size:13.8px;line-height:13.8px;white-space:nowrap;color:#000;right:218.10px;transform-origin:100% 0;transform:scaleX(0.842);">19,633</div>
<div style="position:absolute;top:564.10px;font-size:13.8px;line-height:13.8px;white-space:nowrap;color:#000;right:148.50px;transform-origin:100% 0;transform:scaleX(0.842);">20,820</div>
<div style="position:absolute;top:564.10px;font-size:13.8px;line-height:13.8px;white-space:nowrap;color:#000;right:79.10px;transform-origin:100% 0;transform:scaleX(0.842);">21,953</div>
<div style="position:absolute;top:582.54px;font-size:13.8px;line-height:13.8px;white-space:nowrap;color:#000;left:27.00px;transform-origin:0 0;transform:scaleX(0.842);">Plus: Other Non-Cash Expenses</div>
<div style="position:absolute;top:582.54px;font-size:13.8px;line-height:13.8px;white-space:nowrap;color:#000;right:1127.80px;transform-origin:100% 0;transform:scaleX(0.842);">123</div>
<div style="position:absolute;top:582.54px;font-size:13.8px;line-height:13.8px;white-space:nowrap;color:#000;right:1056.80px;transform-origin:100% 0;transform:scaleX(0.842);">-128</div>
<div style="position:absolute;top:582.54px;font-size:13.8px;line-height:13.8px;white-space:nowrap;color:#000;right:985.30px;transform-origin:100% 0;transform:scaleX(0.842);">486</div>
<div style="position:absolute;top:582.54px;font-size:13.8px;line-height:13.8px;white-space:nowrap;color:#000;right:914.30px;transform-origin:100% 0;transform:scaleX(0.842);">-106</div>
<div style="position:absolute;top:582.54px;font-size:13.8px;line-height:13.8px;white-space:nowrap;color:#000;right:844.30px;transform-origin:100% 0;transform:scaleX(0.842);">-119</div>
<div style="position:absolute;top:582.54px;font-size:13.8px;line-height:13.8px;white-space:nowrap;color:#000;right:775.00px;transform-origin:100% 0;transform:scaleX(0.842);">0</div>
<div style="position:absolute;top:582.54px;font-size:13.8px;line-height:13.8px;white-space:nowrap;color:#000;right:704.70px;transform-origin:100% 0;transform:scaleX(0.842);">0</div>
<div style="position:absolute;top:582.54px;font-size:13.8px;line-height:13.8px;white-space:nowrap;color:#000;right:635.60px;transform-origin:100% 0;transform:scaleX(0.842);">0</div>
<div style="position:absolute;top:582.54px;font-size:13.8px;line-height:13.8px;white-space:nowrap;color:#000;right:565.90px;transform-origin:100% 0;transform:scaleX(0.842);">0</div>
<div style="position:absolute;top:582.54px;font-size:13.8px;line-height:13.8px;white-space:nowrap;color:#000;right:496.60px;transform-origin:100% 0;transform:scaleX(0.842);">0</div>
<div style="position:absolute;top:582.54px;font-size:13.8px;line-height:13.8px;white-space:nowrap;color:#000;right:426.80px;transform-origin:100% 0;transform:scaleX(0.842);">0</div>
<div style="position:absolute;top:582.54px;font-size:13.8px;line-height:13.8px;white-space:nowrap;color:#000;right:357.40px;transform-origin:100% 0;transform:scaleX(0.842);">0</div>
<div style="position:absolute;top:582.54px;font-size:13.8px;line-height:13.8px;white-space:nowrap;color:#000;right:288.10px;transform-origin:100% 0;transform:scaleX(0.842);">0</div>
<div style="position:absolute;top:582.54px;font-size:13.8px;line-height:13.8px;white-space:nowrap;color:#000;right:218.10px;transform-origin:100% 0;transform:scaleX(0.842);">0</div>
<div style="position:absolute;top:582.54px;font-size:13.8px;line-height:13.8px;white-space:nowrap;color:#000;right:148.50px;transform-origin:100% 0;transform:scaleX(0.842);">0</div>
<div style="position:absolute;top:582.54px;font-size:13.8px;line-height:13.8px;white-space:nowrap;color:#000;right:79.10px;transform-origin:100% 0;transform:scaleX(0.842);">0</div>
<div style="position:absolute;top:600.98px;font-size:13.8px;line-height:13.8px;white-space:nowrap;color:#000;left:27.00px;transform-origin:0 0;transform:scaleX(0.842);">Less: Cash Capex</div>
<div style="position:absolute;top:600.98px;font-size:13.8px;line-height:13.8px;white-space:nowrap;color:#000;right:1127.80px;transform-origin:100% 0;transform:scaleX(0.842);">-3,444</div>
<div style="position:absolute;top:600.98px;font-size:13.8px;line-height:13.8px;white-space:nowrap;color:#000;right:1056.80px;transform-origin:100% 0;transform:scaleX(0.842);">-4,893</div>
<div style="position:absolute;top:600.98px;font-size:13.8px;line-height:13.8px;white-space:nowrap;color:#000;right:985.30px;transform-origin:100% 0;transform:scaleX(0.842);">-4,589</div>
<div style="position:absolute;top:600.98px;font-size:13.8px;line-height:13.8px;white-space:nowrap;color:#000;right:914.30px;transform-origin:100% 0;transform:scaleX(0.842);">-6,737</div>
<div style="position:absolute;top:600.98px;font-size:13.8px;line-height:13.8px;white-space:nowrap;color:#000;right:844.30px;transform-origin:100% 0;transform:scaleX(0.842);">-10,058</div>
<div style="position:absolute;top:600.98px;font-size:13.8px;line-height:13.8px;white-space:nowrap;color:#000;right:775.00px;transform-origin:100% 0;transform:scaleX(0.842);">-16,701</div>
<div style="position:absolute;top:600.98px;font-size:13.8px;line-height:13.8px;white-space:nowrap;color:#000;right:704.70px;transform-origin:100% 0;transform:scaleX(0.842);">-21,039</div>
<div style="position:absolute;top:600.98px;font-size:13.8px;line-height:13.8px;white-space:nowrap;color:#000;right:635.60px;transform-origin:100% 0;transform:scaleX(0.842);">-25,895</div>
<div style="position:absolute;top:600.98px;font-size:13.8px;line-height:13.8px;white-space:nowrap;color:#000;right:565.90px;transform-origin:100% 0;transform:scaleX(0.842);">-26,714</div>
<div style="position:absolute;top:600.98px;font-size:13.8px;line-height:13.8px;white-space:nowrap;color:#000;right:496.60px;transform-origin:100% 0;transform:scaleX(0.842);">-31,552</div>
<div style="position:absolute;top:600.98px;font-size:13.8px;line-height:13.8px;white-space:nowrap;color:#000;right:426.80px;transform-origin:100% 0;transform:scaleX(0.842);">-36,134</div>
<div style="position:absolute;top:600.98px;font-size:13.8px;line-height:13.8px;white-space:nowrap;color:#000;right:357.40px;transform-origin:100% 0;transform:scaleX(0.842);">-36,998</div>
<div style="position:absolute;top:600.98px;font-size:13.8px;line-height:13.8px;white-space:nowrap;color:#000;right:288.10px;transform-origin:100% 0;transform:scaleX(0.842);">-36,762</div>
<div style="position:absolute;top:600.98px;font-size:13.8px;line-height:13.8px;white-space:nowrap;color:#000;right:218.10px;transform-origin:100% 0;transform:scaleX(0.842);">-39,740</div>
<div style="position:absolute;top:600.98px;font-size:13.8px;line-height:13.8px;white-space:nowrap;color:#000;right:148.50px;transform-origin:100% 0;transform:scaleX(0.842);">-38,192</div>
<div style="position:absolute;top:600.98px;font-size:13.8px;line-height:13.8px;white-space:nowrap;color:#000;right:79.10px;transform-origin:100% 0;transform:scaleX(0.842);">-40,382</div>
<div style="position:absolute;top:619.42px;font-size:13.8px;line-height:13.8px;white-space:nowrap;color:#000;left:27.00px;transform-origin:0 0;transform:scaleX(0.842);">Plus: Changes in Net Working Capital</div>
<div style="position:absolute;top:619.42px;font-size:13.8px;line-height:13.8px;white-space:nowrap;color:#000;right:1127.80px;transform-origin:100% 0;transform:scaleX(0.842);">769</div>
<div style="position:absolute;top:619.42px;font-size:13.8px;line-height:13.8px;white-space:nowrap;color:#000;right:1056.80px;transform-origin:100% 0;transform:scaleX(0.842);">974</div>
<div style="position:absolute;top:619.42px;font-size:13.8px;line-height:13.8px;white-space:nowrap;color:#000;right:985.30px;transform-origin:100% 0;transform:scaleX(0.842);">2,557</div>
<div style="position:absolute;top:619.42px;font-size:13.8px;line-height:13.8px;white-space:nowrap;color:#000;right:914.30px;transform-origin:100% 0;transform:scaleX(0.842);">3,916</div>
<div style="position:absolute;top:619.42px;font-size:13.8px;line-height:13.8px;white-space:nowrap;color:#000;right:844.30px;transform-origin:100% 0;transform:scaleX(0.842);">-173</div>
<div style="position:absolute;top:619.42px;font-size:13.8px;line-height:13.8px;white-space:nowrap;color:#000;right:775.00px;transform-origin:100% 0;transform:scaleX(0.842);">9,833</div>
<div style="position:absolute;top:619.42px;font-size:13.8px;line-height:13.8px;white-space:nowrap;color:#000;right:704.70px;transform-origin:100% 0;transform:scaleX(0.842);">10,003</div>
<div style="position:absolute;top:619.42px;font-size:13.8px;line-height:13.8px;white-space:nowrap;color:#000;right:635.60px;transform-origin:100% 0;transform:scaleX(0.842);">10,180</div>
<div style="position:absolute;top:619.42px;font-size:13.8px;line-height:13.8px;white-space:nowrap;color:#000;right:565.90px;transform-origin:100% 0;transform:scaleX(0.842);">11,982</div>
<div style="position:absolute;top:619.42px;font-size:13.8px;line-height:13.8px;white-space:nowrap;color:#000;right:496.60px;transform-origin:100% 0;transform:scaleX(0.842);">12,347</div>
<div style="position:absolute;top:619.42px;font-size:13.8px;line-height:13.8px;white-space:nowrap;color:#000;right:426.80px;transform-origin:100% 0;transform:scaleX(0.842);">12,055</div>
<div style="position:absolute;top:619.42px;font-size:13.8px;line-height:13.8px;white-space:nowrap;color:#000;right:357.40px;transform-origin:100% 0;transform:scaleX(0.842);">11,652</div>
<div style="position:absolute;top:619.42px;font-size:13.8px;line-height:13.8px;white-space:nowrap;color:#000;right:288.10px;transform-origin:100% 0;transform:scaleX(0.842);">9,981</div>
<div style="position:absolute;top:619.42px;font-size:13.8px;line-height:13.8px;white-space:nowrap;color:#000;right:218.10px;transform-origin:100% 0;transform:scaleX(0.842);">8,767</div>
<div style="position:absolute;top:619.42px;font-size:13.8px;line-height:13.8px;white-space:nowrap;color:#000;right:148.50px;transform-origin:100% 0;transform:scaleX(0.842);">8,509</div>
<div style="position:absolute;top:619.42px;font-size:13.8px;line-height:13.8px;white-space:nowrap;color:#000;right:79.10px;transform-origin:100% 0;transform:scaleX(0.842);">6,842</div>
<div style="position:absolute;left:25.30px;top:634.00px;width:1433.90px;height:1.00px;background:#6a6a6a;"></div>
<div style="position:absolute;top:637.86px;font-size:13.8px;line-height:13.8px;white-space:nowrap;color:#000;font-weight:bold;left:27.00px;transform-origin:0 0;transform:scaleX(0.852);">Free Cash Flow to Firm (FCFF)</div>
<div style="position:absolute;top:637.86px;font-size:13.8px;line-height:13.8px;white-space:nowrap;color:#000;font-weight:bold;right:1128.30px;transform-origin:100% 0;transform:scaleX(0.852);">2,343</div>
<div style="position:absolute;top:637.86px;font-size:13.8px;line-height:13.8px;white-space:nowrap;color:#000;font-weight:bold;right:1057.30px;transform-origin:100% 0;transform:scaleX(0.852);">2,374</div>
<div style="position:absolute;top:637.86px;font-size:13.8px;line-height:13.8px;white-space:nowrap;color:#000;font-weight:bold;right:985.80px;transform-origin:100% 0;transform:scaleX(0.852);">7,734</div>
<div style="position:absolute;top:637.86px;font-size:13.8px;line-height:13.8px;white-space:nowrap;color:#000;font-weight:bold;right:914.80px;transform-origin:100% 0;transform:scaleX(0.852);">10,817</div>
<div style="position:absolute;top:637.86px;font-size:13.8px;line-height:13.8px;white-space:nowrap;color:#000;font-weight:bold;right:844.80px;transform-origin:100% 0;transform:scaleX(0.852);">8,619</div>
<div style="position:absolute;top:637.86px;font-size:13.8px;line-height:13.8px;white-space:nowrap;color:#000;font-weight:bold;right:775.50px;transform-origin:100% 0;transform:scaleX(0.852);">25,298</div>
<div style="position:absolute;top:637.86px;font-size:13.8px;line-height:13.8px;white-space:nowrap;color:#000;font-weight:bold;right:705.20px;transform-origin:100% 0;transform:scaleX(0.852);">29,089</div>
<div style="position:absolute;top:637.86px;font-size:13.8px;line-height:13.8px;white-space:nowrap;color:#000;font-weight:bold;right:636.10px;transform-origin:100% 0;transform:scaleX(0.852);">36,234</div>
<div style="position:absolute;top:637.86px;font-size:13.8px;line-height:13.8px;white-space:nowrap;color:#000;font-weight:bold;right:566.40px;transform-origin:100% 0;transform:scaleX(0.852);">46,257</div>
<div style="position:absolute;top:637.86px;font-size:13.8px;line-height:13.8px;white-space:nowrap;color:#000;font-weight:bold;right:497.10px;transform-origin:100% 0;transform:scaleX(0.852);">52,988</div>
<div style="position:absolute;top:637.86px;font-size:13.8px;line-height:13.8px;white-space:nowrap;color:#000;font-weight:bold;right:427.30px;transform-origin:100% 0;transform:scaleX(0.852);">59,688</div>
<div style="position:absolute;top:637.86px;font-size:13.8px;line-height:13.8px;white-space:nowrap;color:#000;font-weight:bold;right:357.90px;transform-origin:100% 0;transform:scaleX(0.852);">64,447</div>
<div style="position:absolute;top:637.86px;font-size:13.8px;line-height:13.8px;white-space:nowrap;color:#000;font-weight:bold;right:288.60px;transform-origin:100% 0;transform:scaleX(0.852);">71,132</div>
<div style="position:absolute;top:637.86px;font-size:13.8px;line-height:13.8px;white-space:nowrap;color:#000;font-weight:bold;right:218.60px;transform-origin:100% 0;transform:scaleX(0.852);">78,292</div>
<div style="position:absolute;top:637.86px;font-size:13.8px;line-height:13.8px;white-space:nowrap;color:#000;font-weight:bold;right:149.00px;transform-origin:100% 0;transform:scaleX(0.852);">85,464</div>
<div style="position:absolute;top:637.86px;font-size:13.8px;line-height:13.8px;white-space:nowrap;color:#000;font-weight:bold;right:79.60px;transform-origin:100% 0;transform:scaleX(0.852);">89,116</div>
<div style="position:absolute;top:674.74px;font-size:13.8px;line-height:13.8px;white-space:nowrap;color:#000;left:27.00px;transform-origin:0 0;transform:scaleX(0.842);">Less: Capital Lease Additions</div>
<div style="position:absolute;top:674.74px;font-size:13.8px;line-height:13.8px;white-space:nowrap;color:#000;right:1127.80px;transform-origin:100% 0;transform:scaleX(0.842);">-2,452</div>
<div style="position:absolute;top:674.74px;font-size:13.8px;line-height:13.8px;white-space:nowrap;color:#000;right:1056.80px;transform-origin:100% 0;transform:scaleX(0.842);">-4,751</div>
<div style="position:absolute;top:674.74px;font-size:13.8px;line-height:13.8px;white-space:nowrap;color:#000;right:985.30px;transform-origin:100% 0;transform:scaleX(0.842);">-5,353</div>
<div style="position:absolute;top:674.74px;font-size:13.8px;line-height:13.8px;white-space:nowrap;color:#000;right:914.30px;transform-origin:100% 0;transform:scaleX(0.842);">-6,593</div>
<div style="position:absolute;top:674.74px;font-size:13.8px;line-height:13.8px;white-space:nowrap;color:#000;right:844.30px;transform-origin:100% 0;transform:scaleX(0.842);">-12,643</div>
<div style="position:absolute;top:674.74px;font-size:13.8px;line-height:13.8px;white-space:nowrap;color:#000;right:775.00px;transform-origin:100% 0;transform:scaleX(0.842);">-17,894</div>
<div style="position:absolute;top:674.74px;font-size:13.8px;line-height:13.8px;white-space:nowrap;color:#000;right:704.70px;transform-origin:100% 0;transform:scaleX(0.842);">-18,034</div>
<div style="position:absolute;top:674.74px;font-size:13.8px;line-height:13.8px;white-space:nowrap;color:#000;right:635.60px;transform-origin:100% 0;transform:scaleX(0.842);">-18,496</div>
<div style="position:absolute;top:674.74px;font-size:13.8px;line-height:13.8px;white-space:nowrap;color:#000;right:565.90px;transform-origin:100% 0;transform:scaleX(0.842);">-22,261</div>
<div style="position:absolute;top:674.74px;font-size:13.8px;line-height:13.8px;white-space:nowrap;color:#000;right:496.60px;transform-origin:100% 0;transform:scaleX(0.842);">-26,294</div>
<div style="position:absolute;top:674.74px;font-size:13.8px;line-height:13.8px;white-space:nowrap;color:#000;right:426.80px;transform-origin:100% 0;transform:scaleX(0.842);">-24,089</div>
<div style="position:absolute;top:674.74px;font-size:13.8px;line-height:13.8px;white-space:nowrap;color:#000;right:357.40px;transform-origin:100% 0;transform:scaleX(0.842);">-26,908</div>
<div style="position:absolute;top:674.74px;font-size:13.8px;line-height:13.8px;white-space:nowrap;color:#000;right:288.10px;transform-origin:100% 0;transform:scaleX(0.842);">-29,410</div>
<div style="position:absolute;top:674.74px;font-size:13.8px;line-height:13.8px;white-space:nowrap;color:#000;right:218.10px;transform-origin:100% 0;transform:scaleX(0.842);">-23,844</div>
<div style="position:absolute;top:674.74px;font-size:13.8px;line-height:13.8px;white-space:nowrap;color:#000;right:148.50px;transform-origin:100% 0;transform:scaleX(0.842);">-24,612</div>
<div style="position:absolute;top:674.74px;font-size:13.8px;line-height:13.8px;white-space:nowrap;color:#000;right:79.10px;transform-origin:100% 0;transform:scaleX(0.842);">-26,024</div>
<div style="position:absolute;left:25.30px;top:689.00px;width:1433.90px;height:1.00px;background:#6a6a6a;"></div>
<div style="position:absolute;top:693.18px;font-size:13.8px;line-height:13.8px;white-space:nowrap;color:#000;font-weight:bold;left:27.00px;transform-origin:0 0;transform:scaleX(0.852);">Free Cash Flow to Firm (FCFF) If All Cash Capex</div>
<div style="position:absolute;top:693.18px;font-size:13.8px;line-height:13.8px;white-space:nowrap;color:#000;font-weight:bold;right:1128.30px;transform-origin:100% 0;transform:scaleX(0.852);">-109</div>
<div style="position:absolute;top:693.18px;font-size:13.8px;line-height:13.8px;white-space:nowrap;color:#000;font-weight:bold;right:1057.30px;transform-origin:100% 0;transform:scaleX(0.852);">-2,377</div>
<div style="position:absolute;top:693.18px;font-size:13.8px;line-height:13.8px;white-space:nowrap;color:#000;font-weight:bold;right:985.80px;transform-origin:100% 0;transform:scaleX(0.852);">2,381</div>
<div style="position:absolute;top:693.18px;font-size:13.8px;line-height:13.8px;white-space:nowrap;color:#000;font-weight:bold;right:914.80px;transform-origin:100% 0;transform:scaleX(0.852);">4,224</div>
<div style="position:absolute;top:693.18px;font-size:13.8px;line-height:13.8px;white-space:nowrap;color:#000;font-weight:bold;right:844.80px;transform-origin:100% 0;transform:scaleX(0.852);">-4,024</div>
<div style="position:absolute;top:693.18px;font-size:13.8px;line-height:13.8px;white-space:nowrap;color:#000;font-weight:bold;right:775.50px;transform-origin:100% 0;transform:scaleX(0.852);">7,404</div>
<div style="position:absolute;top:693.18px;font-size:13.8px;line-height:13.8px;white-space:nowrap;color:#000;font-weight:bold;right:705.20px;transform-origin:100% 0;transform:scaleX(0.852);">11,055</div>
<div style="position:absolute;top:693.18px;font-size:13.8px;line-height:13.8px;white-space:nowrap;color:#000;font-weight:bold;right:636.10px;transform-origin:100% 0;transform:scaleX(0.852);">17,738</div>
<div style="position:absolute;top:693.18px;font-size:13.8px;line-height:13.8px;white-space:nowrap;color:#000;font-weight:bold;right:566.40px;transform-origin:100% 0;transform:scaleX(0.852);">23,996</div>
<div style="position:absolute;top:693.18px;font-size:13.8px;line-height:13.8px;white-space:nowrap;color:#000;font-weight:bold;right:497.10px;transform-origin:100% 0;transform:scaleX(0.852);">26,694</div>
<div style="position:absolute;top:693.18px;font-size:13.8px;line-height:13.8px;white-space:nowrap;color:#000;font-weight:bold;right:427.30px;transform-origin:100% 0;transform:scaleX(0.852);">35,599</div>
<div style="position:absolute;top:693.18px;font-size:13.8px;line-height:13.8px;white-space:nowrap;color:#000;font-weight:bold;right:357.90px;transform-origin:100% 0;transform:scaleX(0.852);">37,539</div>
<div style="position:absolute;top:693.18px;font-size:13.8px;line-height:13.8px;white-space:nowrap;color:#000;font-weight:bold;right:288.60px;transform-origin:100% 0;transform:scaleX(0.852);">41,722</div>
<div style="position:absolute;top:693.18px;font-size:13.8px;line-height:13.8px;white-space:nowrap;color:#000;font-weight:bold;right:218.60px;transform-origin:100% 0;transform:scaleX(0.852);">54,448</div>
<div style="position:absolute;top:693.18px;font-size:13.8px;line-height:13.8px;white-space:nowrap;color:#000;font-weight:bold;right:149.00px;transform-origin:100% 0;transform:scaleX(0.852);">60,852</div>
<div style="position:absolute;top:693.18px;font-size:13.8px;line-height:13.8px;white-space:nowrap;color:#000;font-weight:bold;right:79.60px;transform-origin:100% 0;transform:scaleX(0.852);">63,092</div>
<div style="position:absolute;top:730.06px;font-size:13.8px;line-height:13.8px;white-space:nowrap;color:#000;font-weight:bold;left:27.00px;transform-origin:0 0;transform:scaleX(0.852);">Discounted Cash Flow (DCF) Analysis</div>
<div style="position:absolute;left:25.00px;top:744.00px;width:529.00px;height:1.00px;background:#8c8c8c;"></div>
<div style="position:absolute;left:25.00px;top:874.00px;width:529.00px;height:1.00px;background:#8c8c8c;"></div>
<div style="position:absolute;left:553.00px;top:744.00px;width:1.00px;height:131.00px;background:#8c8c8c;"></div>
<div style="position:absolute;left:339.10px;top:763.38px;width:70.40px;height:17.44px;border:1px dotted #777;background:#f3f3f3"></div>
<div style="position:absolute;left:339.00px;top:763.00px;width:215.00px;height:1.00px;background:#555;"></div>
<div style="position:absolute;top:748.50px;font-size:13.8px;line-height:13.8px;white-space:nowrap;color:#000;right:1127.80px;transform-origin:100% 0;transform:scaleX(0.842);">Model</div>
<div style="position:absolute;top:748.50px;font-size:13.8px;line-height:13.8px;white-space:nowrap;color:#000;right:1056.80px;transform-origin:100% 0;transform:scaleX(0.842);">Exit Multiple</div>
<div style="position:absolute;top:748.50px;font-size:13.8px;line-height:13.8px;white-space:nowrap;color:#000;right:985.30px;transform-origin:100% 0;transform:scaleX(0.842);">Growth Rate</div>
<div style="position:absolute;top:766.94px;font-size:13.8px;line-height:13.8px;white-space:nowrap;color:#000;left:27.00px;transform-origin:0 0;transform:scaleX(0.842);">Terminal Value (Choose Option --&gt;)</div>
<div style="position:absolute;top:766.94px;font-size:13.8px;line-height:13.8px;white-space:nowrap;color:#0000ff;right:1127.80px;transform-origin:100% 0;transform:scaleX(0.842);">Exit Multiple</div>
<div style="position:absolute;top:766.94px;font-size:13.8px;line-height:13.8px;white-space:nowrap;color:#0000ff;right:1056.80px;transform-origin:100% 0;transform:scaleX(0.842);">12.0x</div>
<div style="position:absolute;top:766.94px;font-size:13.8px;line-height:13.8px;white-space:nowrap;color:#0000ff;right:985.30px;transform-origin:100% 0;transform:scaleX(0.842);">4.0%</div>
<div style="position:absolute;top:785.38px;font-size:13.8px;line-height:13.8px;white-space:nowrap;color:#000;left:27.00px;transform-origin:0 0;transform:scaleX(0.842);">Terminal Value in Model</div>
<div style="position:absolute;top:785.38px;font-size:13.8px;line-height:13.8px;white-space:nowrap;color:#000;right:1127.80px;transform-origin:100% 0;transform:scaleX(0.842);">1,605,714</div>
<div style="position:absolute;top:785.38px;font-size:13.8px;line-height:13.8px;white-space:nowrap;color:#000;right:1056.80px;transform-origin:100% 0;transform:scaleX(0.842);">1,605,714</div>
<div style="position:absolute;top:785.38px;font-size:13.8px;line-height:13.8px;white-space:nowrap;color:#000;right:985.30px;transform-origin:100% 0;transform:scaleX(0.842);">1,853,611</div>
<div style="position:absolute;top:803.82px;font-size:13.8px;line-height:13.8px;white-space:nowrap;color:#000;left:27.00px;transform-origin:0 0;transform:scaleX(0.842);">Discount Rate</div>
<div style="position:absolute;top:803.82px;font-size:13.8px;line-height:13.8px;white-space:nowrap;color:#0000ff;right:1127.80px;transform-origin:100% 0;transform:scaleX(0.842);">9.0%</div>
<div style="position:absolute;top:822.26px;font-size:13.8px;line-height:13.8px;white-space:nowrap;color:#000;left:27.00px;transform-origin:0 0;transform:scaleX(0.842);">Valuation Date</div>
<div style="position:absolute;top:822.26px;font-size:13.8px;line-height:13.8px;white-space:nowrap;color:#0000ff;right:1127.80px;transform-origin:100% 0;transform:scaleX(0.842);">2018-11-09</div>
<div style="position:absolute;top:840.70px;font-size:13.8px;line-height:13.8px;white-space:nowrap;color:#000;left:27.00px;transform-origin:0 0;transform:scaleX(0.842);"># Shares Outstanding as of Valuation Date (millions)</div>
<div style="position:absolute;top:840.70px;font-size:13.8px;line-height:13.8px;white-space:nowrap;color:#0000ff;right:1131.50px;transform-origin:100% 0;transform:scaleX(0.842);">501</div>
<div style="position:absolute;top:859.14px;font-size:13.8px;line-height:13.8px;white-space:nowrap;color:#000;left:27.00px;transform-origin:0 0;transform:scaleX(0.842);">Market Price as of Valuation Date</div>
<div style="position:absolute;top:859.14px;font-size:13.8px;line-height:13.8px;white-space:nowrap;color:#0000ff;right:1131.50px;transform-origin:100% 0;transform:scaleX(0.842);">$1,755</div>
<svg style="position:absolute;left:0;top:0" width="1536" height="938"><polygon points="621,814.2 669.7,814.2 669.7,843.8 694.0,843.8 645.4,872.3 597.0,843.8 621,843.8" fill="#132e57"/></svg>
<svg style="position:absolute;left:0;top:0" width="1536" height="938"><polygon points="1456.8,814.2 1501,814.2 1501,843.6 1523,843.6 1478.9,872.3 1434.8,843.6 1456.8,843.6" fill="#132e57"/></svg>
<div style="position:absolute;top:877.58px;font-size:13.8px;line-height:13.8px;white-space:nowrap;color:#000;font-weight:bold;right:844.30px;transform-origin:100% 0;transform:scaleX(0.852);">Valuation Date</div>
<div style="position:absolute;left:624.00px;top:892.00px;width:70.00px;height:1.00px;background:#3c3c3c;"></div>
<div style="position:absolute;top:877.58px;font-size:13.8px;line-height:13.8px;white-space:nowrap;color:#000;font-weight:bold;right:16.20px;transform-origin:100% 0;transform:scaleX(0.852);">Terminal Value</div>
<div style="position:absolute;left:1459.00px;top:892.00px;width:64.00px;height:1.00px;background:#3c3c3c;"></div>
<div style="position:absolute;top:896.02px;font-size:13.8px;line-height:13.8px;white-space:nowrap;color:#000;font-weight:bold;left:27.00px;transform-origin:0 0;transform:scaleX(0.852);">Valuation Timeline</div>
<div style="position:absolute;top:896.02px;font-size:13.8px;line-height:13.8px;white-space:nowrap;color:#000;right:844.30px;transform-origin:100% 0;transform:scaleX(0.842);">11-09-18</div>
<div style="position:absolute;top:914.46px;font-size:13.8px;line-height:13.8px;white-space:nowrap;color:#000;right:844.30px;transform-origin:100% 0;transform:scaleX(0.842);">Year Frac</div>
<div style="position:absolute;top:896.02px;font-size:13.8px;line-height:13.8px;white-space:nowrap;color:#000;right:775.00px;transform-origin:100% 0;transform:scaleX(0.842);">12-31-18</div>
<div style="position:absolute;top:914.46px;font-size:13.8px;line-height:13.8px;white-space:nowrap;color:#000;right:775.00px;transform-origin:100% 0;transform:scaleX(0.842);">0.14</div>
<div style="position:absolute;top:896.02px;font-size:13.8px;line-height:13.8px;white-space:nowrap;color:#000;right:704.70px;transform-origin:100% 0;transform:scaleX(0.842);">12-31-19</div>
<div style="position:absolute;top:914.46px;font-size:13.8px;line-height:13.8px;white-space:nowrap;color:#000;right:704.70px;transform-origin:100% 0;transform:scaleX(0.842);">1.00</div>
<div style="position:absolute;top:896.02px;font-size:13.8px;line-height:13.8px;white-space:nowrap;color:#000;right:635.60px;transform-origin:100% 0;transform:scaleX(0.842);">12-31-20</div>
<div style="position:absolute;top:914.46px;font-size:13.8px;line-height:13.8px;white-space:nowrap;color:#000;right:635.60px;transform-origin:100% 0;transform:scaleX(0.842);">1.00</div>
<div style="position:absolute;top:896.02px;font-size:13.8px;line-height:13.8px;white-space:nowrap;color:#000;right:565.90px;transform-origin:100% 0;transform:scaleX(0.842);">12-31-21</div>
<div style="position:absolute;top:914.46px;font-size:13.8px;line-height:13.8px;white-space:nowrap;color:#000;right:565.90px;transform-origin:100% 0;transform:scaleX(0.842);">1.00</div>
<div style="position:absolute;top:896.02px;font-size:13.8px;line-height:13.8px;white-space:nowrap;color:#000;right:496.60px;transform-origin:100% 0;transform:scaleX(0.842);">12-31-22</div>
<div style="position:absolute;top:914.46px;font-size:13.8px;line-height:13.8px;white-space:nowrap;color:#000;right:496.60px;transform-origin:100% 0;transform:scaleX(0.842);">1.00</div>
<div style="position:absolute;top:896.02px;font-size:13.8px;line-height:13.8px;white-space:nowrap;color:#000;right:426.80px;transform-origin:100% 0;transform:scaleX(0.842);">12-31-23</div>
<div style="position:absolute;top:914.46px;font-size:13.8px;line-height:13.8px;white-space:nowrap;color:#000;right:426.80px;transform-origin:100% 0;transform:scaleX(0.842);">1.00</div>
<div style="position:absolute;top:896.02px;font-size:13.8px;line-height:13.8px;white-space:nowrap;color:#000;right:357.40px;transform-origin:100% 0;transform:scaleX(0.842);">12-31-24</div>
<div style="position:absolute;top:914.46px;font-size:13.8px;line-height:13.8px;white-space:nowrap;color:#000;right:357.40px;transform-origin:100% 0;transform:scaleX(0.842);">1.00</div>
<div style="position:absolute;top:896.02px;font-size:13.8px;line-height:13.8px;white-space:nowrap;color:#000;right:288.10px;transform-origin:100% 0;transform:scaleX(0.842);">12-31-25</div>
<div style="position:absolute;top:914.46px;font-size:13.8px;line-height:13.8px;white-space:nowrap;color:#000;right:288.10px;transform-origin:100% 0;transform:scaleX(0.842);">1.00</div>
<div style="position:absolute;top:896.02px;font-size:13.8px;line-height:13.8px;white-space:nowrap;color:#000;right:218.10px;transform-origin:100% 0;transform:scaleX(0.842);">12-31-26</div>
<div style="position:absolute;top:914.46px;font-size:13.8px;line-height:13.8px;white-space:nowrap;color:#000;right:218.10px;transform-origin:100% 0;transform:scaleX(0.842);">1.00</div>
<div style="position:absolute;top:896.02px;font-size:13.8px;line-height:13.8px;white-space:nowrap;color:#000;right:148.50px;transform-origin:100% 0;transform:scaleX(0.842);">12-31-27</div>
<div style="position:absolute;top:914.46px;font-size:13.8px;line-height:13.8px;white-space:nowrap;color:#000;right:148.50px;transform-origin:100% 0;transform:scaleX(0.842);">1.00</div>
<div style="position:absolute;top:896.02px;font-size:13.8px;line-height:13.8px;white-space:nowrap;color:#000;right:79.10px;transform-origin:100% 0;transform:scaleX(0.842);">12-31-28</div>
<div style="position:absolute;top:914.46px;font-size:13.8px;line-height:13.8px;white-space:nowrap;color:#000;right:79.10px;transform-origin:100% 0;transform:scaleX(0.842);">1.00</div>
<div style="position:absolute;top:896.02px;font-size:13.8px;line-height:13.8px;white-space:nowrap;color:#000;right:15.00px;transform-origin:100% 0;transform:scaleX(0.842);">12-31-28</div>
<div style="position:absolute;top:914.46px;font-size:13.8px;line-height:13.8px;white-space:nowrap;color:#0000ff;right:15.00px;transform-origin:100% 0;transform:scaleX(0.842);">1.00</div>
<div style="position:absolute;left:25.00px;top:929.00px;width:1498.00px;height:1.00px;background:#505050;"></div>
</body></html>
